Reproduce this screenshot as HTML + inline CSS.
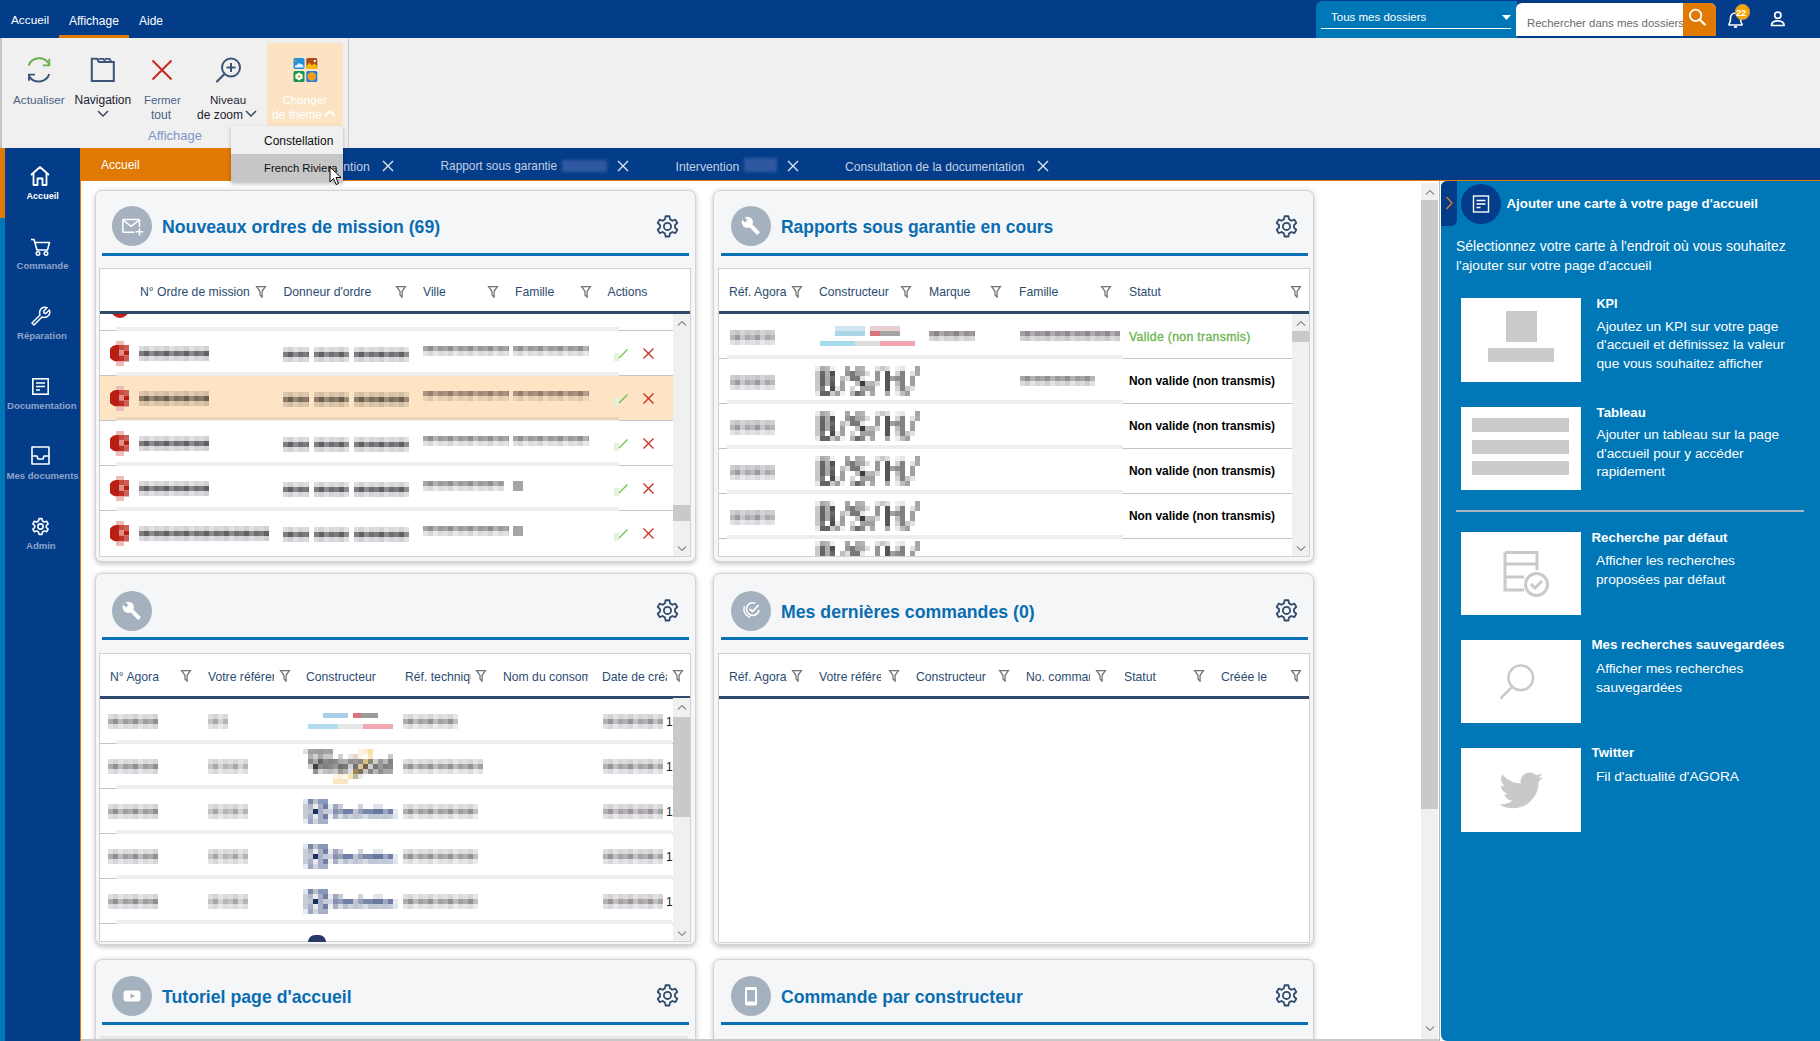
<!DOCTYPE html>
<html><head><meta charset="utf-8">
<style>
*{box-sizing:border-box;margin:0;padding:0}
html,body{width:1820px;height:1041px;overflow:hidden;background:#fff;font-family:"Liberation Sans",sans-serif;position:relative}
.a{position:absolute}
.t{position:absolute;white-space:nowrap;line-height:1}
#top{left:0;top:0;width:1820px;height:38px;background:#033d8a}
#ribbon{left:0;top:38px;width:1820px;height:110px;background:#f0f0f0;border-left:2px solid #c4c4c4}
#tabbar{left:80px;top:148px;width:1740px;height:33px;background:#033d8a;border-bottom:1px solid #e07a05}
#side{left:5px;top:148px;width:75px;height:893px;background:#033d8a}
.card{position:absolute;width:600px;background:#f5f6f8;border:1px solid #d4d4d4;border-radius:7px;box-shadow:0 1.5px 5px rgba(0,0,0,.24)}
.circ{position:absolute;left:16px;top:15px;width:40px;height:40px;border-radius:50%;background:#a6b1bf}
.ctitle{position:absolute;left:66px;top:26px;font-weight:bold;font-size:17.7px;color:#0a6db0;white-space:nowrap;line-height:1}
.cline{position:absolute;left:6px;top:62px;width:588px;height:3px;background:#0a6fb5}
.gear{position:absolute;left:559px;top:24px;width:22px;height:22px}
.tbl{position:absolute;left:3px;top:77px;width:592px;background:#fff;border:1px solid #d2d2d2}
.th{position:absolute;top:0;left:0;right:0;height:46px;border-bottom:3px solid #2f4a6a}
.hd{position:absolute;top:17px;font-size:12.5px;color:#2c4a6c;white-space:nowrap;line-height:1}
.flt{position:absolute;top:16px;width:10px;height:13px}
</style></head><body>
<div id="top" class="a"></div>
<div id="ribbon" class="a"></div>
<div id="tabbar" class="a"></div>
<div class="a" style="left:0;top:148px;width:5px;height:70px;background:#e07a05"></div>
<div class="a" style="left:0;top:218px;width:5px;height:823px;background:#0077b6"></div>
<div id="side" class="a"></div>
<div class="a" style="left:80px;top:181px;width:1px;height:860px;background:#e07a05"></div>
<div class="a" style="left:81px;top:1039px;width:1358px;height:2px;background:#c8c8c8"></div>

<!-- top bar content -->
<div class="t" style="left:11px;top:15px;font-size:11.8px;color:#fff">Accueil</div>
<div class="t" style="left:69px;top:15px;font-size:12px;color:#fff">Affichage</div>
<div class="t" style="left:139px;top:15px;font-size:12px;color:#fff">Aide</div>
<div class="a" style="left:59px;top:35px;width:70px;height:3px;background:#e07a05"></div>
<div class="a" style="left:1316px;top:1px;width:201px;height:37px;background:#0077b6;border-radius:6px 0 0 0"></div>
<div class="t" style="left:1331px;top:12.3px;font-size:11.5px;color:#fff">Tous mes dossiers</div>
<div class="a" style="left:1321px;top:28px;width:190px;height:1px;background:#fff"></div>
<svg class="a" style="left:1502px;top:15px" width="10" height="6"><path d="M0,0 L9,0 L4.5,5 Z" fill="#fff"/></svg>
<div class="a" style="left:1516px;top:3px;width:200px;height:33px;background:#fff;border-radius:6px 6px 0 0;overflow:hidden">
  <div class="t" style="left:11px;top:14.5px;font-size:11.4px;color:#6a6a6a">Rechercher dans mes dossiers</div>
  <div class="a" style="left:167px;top:0;width:33px;height:33px;background:#e07a05"></div>
</div>
<svg class="a" style="left:1689px;top:8px" width="22" height="22" viewBox="0 0 22 22"><circle cx="6.6" cy="7.4" r="5.7" fill="none" stroke="#fff" stroke-width="1.8"/><path d="M10.6,11.5 L15.8,16.6" stroke="#fff" stroke-width="2.1" stroke-linecap="round"/></svg>
<svg class="a" style="left:1726px;top:10px" width="20" height="20" viewBox="0 0 20 20"><path d="M3,15 L3,14 C4.5,12.5 4.5,11 4.5,8.5 C4.5,5 7,3 9.5,3 C12,3 14.5,5 14.5,8.5 C14.5,11 14.5,12.5 16,14 L16,15 Z" fill="none" stroke="#fff" stroke-width="1.6" stroke-linejoin="round"/><path d="M8,17 L11,17" stroke="#fff" stroke-width="1.8"/></svg>
<div class="a" style="left:1734.5px;top:4px;width:15.5px;height:15.5px;border-radius:50%;background:#f7a500;border:1px solid #d8a040"></div>
<div class="t" style="left:1736px;top:7.5px;font-size:9.5px;font-weight:bold;color:#fff;letter-spacing:-0.3px">22</div>
<svg class="a" style="left:1768px;top:10px" width="20" height="18" viewBox="0 0 20 18"><circle cx="9.8" cy="5.2" r="3.1" fill="none" stroke="#fff" stroke-width="1.7"/><path d="M3.5,15.5 C3.5,12 6.5,10.8 9.8,10.8 C13.1,10.8 16.1,12 16.1,15.5 Z" fill="none" stroke="#fff" stroke-width="1.7" stroke-linejoin="round"/></svg>

<!-- ribbon content -->
<svg class="a" style="left:26px;top:55px" width="28" height="30" viewBox="0 0 28 30">
  <path d="M2.6,10.6 A11.3,11.3 0 0 1 22.8,8.6" fill="none" stroke="#6ab04c" stroke-width="1.9"/>
  <path d="M23.3,3.8 L23.3,10.4 L16.8,10.4" fill="none" stroke="#6ab04c" stroke-width="1.9"/>
  <path d="M23.3,19.2 A11.3,11.3 0 0 1 3.4,21.6" fill="none" stroke="#3b5578" stroke-width="1.9"/>
  <path d="M3,25.8 L3,19.6 L9,19.6" fill="none" stroke="#3b5578" stroke-width="1.9"/>
</svg>
<svg class="a" style="left:90px;top:57px" width="26" height="26" viewBox="0 0 26 26">
  <path d="M1.8,1.8 L7,1.8 L9,5 L23.8,5 L23.8,24 L1.8,24 Z" fill="none" stroke="#3b5578" stroke-width="2"/>
  <path d="M8.5,1.8 L13.5,1.8 L15.5,5 M15,1.8 L19.5,1.8 L21.5,5" fill="none" stroke="#3b5578" stroke-width="1.8"/>
</svg>
<svg class="a" style="left:150px;top:58px" width="24" height="24" viewBox="0 0 24 24"><path d="M2.5,2.5 L21.5,21.5 M21.5,2.5 L2.5,21.5" stroke="#c9281c" stroke-width="2"/></svg>
<svg class="a" style="left:214px;top:55.5px" width="30" height="30" viewBox="0 0 30 30">
  <circle cx="17" cy="11.5" r="9" fill="none" stroke="#3b5578" stroke-width="2"/>
  <path d="M10.5,18 L3,25.5" stroke="#3b5578" stroke-width="2.2" stroke-linecap="round"/>
  <path d="M17,7 L17,16 M12.5,11.5 L21.5,11.5" stroke="#3b5578" stroke-width="2"/>
</svg>
<div class="a" style="left:267px;top:43px;width:76px;height:83px;background:#fce3c4"></div>
<svg class="a" style="left:292.5px;top:58px" width="26" height="26" viewBox="0 0 26 26">
  <rect x="0.5" y="0" width="11" height="11" rx="1.6" fill="#1e90e0"/>
  <path d="M2,9.5 C1.5,8 2.5,6.8 4,7 C4.3,5.2 6.5,4.6 7.6,6 C8.8,5.6 10.2,6.4 10,7.8 C11,8.2 10.8,9.5 10,9.6 Z" fill="#e8eef4"/>
  <circle cx="2.6" cy="2.6" r="1.1" fill="#f08a10"/>
  <rect x="13.3" y="0" width="11" height="11" rx="1.6" fill="#b04a18"/>
  <path d="M13.3,11 L13.3,8 L16.5,4.8 L19,7.2 L21.5,5.5 L24.3,8.5 L24.3,11 Z" fill="#f5b810"/>
  <circle cx="21.8" cy="3" r="1.2" fill="#fdf0c8"/>
  <rect x="0.5" y="13" width="11" height="11" rx="1.6" fill="#16964e"/>
  <g fill="#fff"><circle cx="6" cy="16.2" r="1.6"/><circle cx="6" cy="20.8" r="1.6"/><circle cx="3.9" cy="17.4" r="1.6"/><circle cx="8.1" cy="17.4" r="1.6"/><circle cx="3.9" cy="19.6" r="1.6"/><circle cx="8.1" cy="19.6" r="1.6"/></g>
  <circle cx="6" cy="18.5" r="1.3" fill="#f5a010"/>
  <rect x="13.3" y="13" width="11" height="11" rx="1.6" fill="#2a7ad8"/>
  <circle cx="18.8" cy="18.5" r="3.9" fill="#f59a10" stroke="#f8c030" stroke-width="0.8" stroke-dasharray="1 1"/>
</svg>
<div class="t" style="left:13px;top:94.5px;font-size:11.8px;color:#4a6385">Actualiser</div>
<div class="t" style="left:74.5px;top:94.3px;font-size:12px;color:#1c2233">Navigation</div>
<svg class="a" style="left:97px;top:110px" width="12" height="7" viewBox="0 0 12 7"><path d="M1,1 L6,6 L11,1" fill="none" stroke="#3b4660" stroke-width="1.5"/></svg>
<div class="t" style="left:144px;top:94.5px;font-size:11.4px;color:#4a6385">Fermer</div>
<div class="t" style="left:151px;top:108.5px;font-size:12px;color:#4a6385">tout</div>
<div class="t" style="left:210px;top:93.5px;font-size:11.6px;color:#1c2233">Niveau</div>
<div class="t" style="left:197px;top:108.5px;font-size:12px;color:#1c2233">de zoom</div>
<svg class="a" style="left:245px;top:110px" width="12" height="7" viewBox="0 0 12 7"><path d="M1,1 L6,6 L11,1" fill="none" stroke="#3b4660" stroke-width="1.5"/></svg>
<div class="t" style="left:282.5px;top:93.5px;font-size:11.6px;color:#fff">Changer</div>
<div class="t" style="left:272px;top:108.5px;font-size:12px;color:#fff">de thème</div>
<svg class="a" style="left:324px;top:110px" width="12" height="7" viewBox="0 0 12 7"><path d="M1,6 L6,1 L11,6" fill="none" stroke="#fff" stroke-width="1.8"/></svg>
<div class="t" style="left:148px;top:128.5px;font-size:13px;color:#7f95c2">Affichage</div>
<div class="a" style="left:348px;top:38px;width:1px;height:110px;background:#c8c8c8"></div>

<!-- tabs -->
<div class="a" style="left:80px;top:148px;width:152px;height:33px;background:#e07a05"></div>
<div class="t" style="left:101px;top:158.5px;font-size:12px;color:#fff">Accueil</div>
<div class="t" style="left:306px;top:160.5px;font-size:12.2px;color:#c3cfe2">Intervention</div>
<svg class="a" style="left:382px;top:160px" width="12" height="12" viewBox="0 0 12 12"><path d="M1,1 L11,11 M11,1 L1,11" stroke="#dfe6f0" stroke-width="1.4"/></svg>
<div class="t" style="left:440.5px;top:160.5px;font-size:11.85px;color:#c3cfe2">Rapport sous garantie</div>
<div class="a" style="left:562px;top:160px;width:45px;height:12px;background:#3a5fa6;filter:blur(1.5px);opacity:.8"></div>
<svg class="a" style="left:617px;top:160px" width="12" height="12" viewBox="0 0 12 12"><path d="M1,1 L11,11 M11,1 L1,11" stroke="#dfe6f0" stroke-width="1.4"/></svg>
<div class="t" style="left:675.5px;top:160.5px;font-size:12.2px;color:#c3cfe2">Intervention</div>
<div class="a" style="left:744px;top:158px;width:33px;height:14px;background:#3a5fa6;filter:blur(1.5px);opacity:.8"></div>
<svg class="a" style="left:787px;top:160px" width="12" height="12" viewBox="0 0 12 12"><path d="M1,1 L11,11 M11,1 L1,11" stroke="#dfe6f0" stroke-width="1.4"/></svg>
<div class="t" style="left:845px;top:160.5px;font-size:12.1px;color:#c3cfe2">Consultation de la documentation</div>
<svg class="a" style="left:1037px;top:160px" width="12" height="12" viewBox="0 0 12 12"><path d="M1,1 L11,11 M11,1 L1,11" stroke="#dfe6f0" stroke-width="1.4"/></svg>

<!-- sidebar -->
<svg class="a" style="left:29px;top:165px" width="22" height="22" viewBox="0 0 22 22"><path d="M2,10 L11,2 L20,10 M4.5,8 L4.5,20 L8.5,20 L8.5,13.5 L13.5,13.5 L13.5,20 L17.5,20 L17.5,8" fill="none" stroke="#fff" stroke-width="1.8" stroke-linejoin="round"/></svg>
<div class="t" style="left:26.5px;top:192px;font-size:9.1px;font-weight:bold;color:#fff">Accueil</div>
<svg class="a" style="left:30px;top:238px" width="22" height="19" viewBox="0 0 22 19"><path d="M1,1.5 L4,1.5 L7,12 L17.5,12 L19.5,4.5 L5.5,4.5" fill="none" stroke="#fff" stroke-width="1.6" stroke-linejoin="round"/><circle cx="8" cy="15.5" r="1.8" fill="none" stroke="#fff" stroke-width="1.5"/><circle cx="16" cy="15.5" r="1.8" fill="none" stroke="#fff" stroke-width="1.5"/></svg>
<div class="t" style="left:16.5px;top:261px;font-size:9.55px;font-weight:bold;color:#8fa5c9">Commande</div>
<svg class="a" style="left:30px;top:306px" width="21" height="21" viewBox="0 0 21 21"><path d="M3,18 L11,10 C10,7 11,3.5 14,2.5 C15.5,2 17,2.2 18,2.7 L14.5,6.2 L15,8 L16.8,8.5 L20.3,5 C20.8,6 21,7.5 20.5,9 C19.5,12 16,13 13,12 L5,20 Z" fill="none" stroke="#fff" stroke-width="1.5" stroke-linejoin="round" transform="translate(-1,-1)"/></svg>
<div class="t" style="left:17px;top:331px;font-size:9.55px;font-weight:bold;color:#8fa5c9">Réparation</div>
<svg class="a" style="left:31.5px;top:377.5px" width="17" height="17" viewBox="0 0 17 17"><rect x="0.8" y="0.8" width="15.4" height="15.4" fill="none" stroke="#fff" stroke-width="1.6"/><path d="M4,5 L13,5 M4,8.5 L13,8.5 M4,12 L8,12" stroke="#fff" stroke-width="1.5"/></svg>
<div class="t" style="left:7px;top:401px;font-size:9.55px;font-weight:bold;color:#8fa5c9">Documentation</div>
<svg class="a" style="left:31px;top:446px" width="19" height="19" viewBox="0 0 19 19"><path d="M1,1 L18,1 L18,18 L1,18 Z M1,10 L6,10 L7,13 L12,13 L13,10 L18,10" fill="none" stroke="#fff" stroke-width="1.6" stroke-linejoin="round"/></svg>
<div class="t" style="left:6.5px;top:471px;font-size:9.55px;font-weight:bold;color:#8fa5c9">Mes documents</div>
<svg class="a" style="left:30px;top:516px" width="21" height="21" viewBox="0 0 24 24"><path d="M10.3,2 L13.7,2 L14.3,4.8 C15,5.1 15.7,5.5 16.3,6 L19,5 L20.7,8 L18.6,9.9 C18.7,10.6 18.7,11.4 18.6,12.1 L20.7,14 L19,17 L16.3,16 C15.7,16.5 15,16.9 14.3,17.2 L13.7,20 L10.3,20 L9.7,17.2 C9,16.9 8.3,16.5 7.7,16 L5,17 L3.3,14 L5.4,12.1 C5.3,11.4 5.3,10.6 5.4,9.9 L3.3,8 L5,5 L7.7,6 C8.3,5.5 9,5.1 9.7,4.8 Z" fill="none" stroke="#fff" stroke-width="1.8" stroke-linejoin="round" transform="translate(0,1)"/><circle cx="12" cy="12" r="3" fill="none" stroke="#fff" stroke-width="1.8"/></svg>
<div class="t" style="left:26px;top:541px;font-size:9.55px;font-weight:bold;color:#8fa5c9">Admin</div>
<div class="card" style="left:95px;top:190px;width:601px;height:372px"></div>
<div class="a" style="left:112px;top:206px;width:40px;height:40px;border-radius:50%;background:#a6b1bf"></div>
<svg class="a" style="left:112px;top:206px" width="40" height="40" viewBox="0 0 40 40"><path d="M27.5,21 L27.5,14.6 Q27.5,13.6 26.5,13.6 L11.8,13.6 Q10.8,13.6 10.8,14.6 L10.8,25.2 Q10.8,26.2 11.8,26.2 L22.5,26.2" fill="none" stroke="#fff" stroke-width="1.5"/><path d="M11.4,14.4 L19.2,20.3 L27,14.4" fill="none" stroke="#fff" stroke-width="1.5"/><path d="M27.5,22.2 L27.5,29.5 M23.8,25.8 L31.2,25.8" stroke="#fff" stroke-width="1.5"/></svg>
<div class="t" style="left:162px;top:219.21px;font-size:17.7px;color:#0a6db0;font-weight:bold;">Nouveaux ordres de mission (69)</div>
<div class="a" style="left:102px;top:253px;width:587px;height:3px;background:#0a6fb5"></div>
<svg class="a" style="left:653.5px;top:213.5px" width="27" height="27" viewBox="0 0 24 24"><path d="M10.3,2 L13.7,2 L14.3,4.8 C15,5.1 15.7,5.5 16.3,6 L19,5 L20.7,8 L18.6,9.9 C18.7,10.6 18.7,11.4 18.6,12.1 L20.7,14 L19,17 L16.3,16 C15.7,16.5 15,16.9 14.3,17.2 L13.7,20 L10.3,20 L9.7,17.2 C9,16.9 8.3,16.5 7.7,16 L5,17 L3.3,14 L5.4,12.1 C5.3,11.4 5.3,10.6 5.4,9.9 L3.3,8 L5,5 L7.7,6 C8.3,5.5 9,5.1 9.7,4.8 Z" fill="none" stroke="#2f4a6a" stroke-width="1.6" stroke-linejoin="round"/><circle cx="12" cy="11" r="3.2" fill="none" stroke="#2f4a6a" stroke-width="1.6"/></svg>
<div class="a" style="left:99px;top:268px;width:592px;height:289px;background:#fff;border:1px solid #d0d0d0"></div>
<div class="a" style="left:100px;top:311px;width:590px;height:3px;background:#2f4a6a"></div>
<div class="t" style="left:140px;top:285.67px;font-size:12.2px;color:#2c4b70;font-weight:normal;">N° Ordre de mission</div>
<svg class="a" style="left:255px;top:285px" width="12" height="13" viewBox="0 0 12 13"><path d="M1.6,1.7 L10.4,1.7 L7.1,6.3 L7.1,12.2 L5,9.9 L5,6.3 Z" fill="none" stroke="#727272" stroke-width="1.25" stroke-linejoin="miter"/></svg>
<div class="t" style="left:283.5px;top:285.67px;font-size:12.2px;color:#2c4b70;font-weight:normal;">Donneur d'ordre</div>
<svg class="a" style="left:395px;top:285px" width="12" height="13" viewBox="0 0 12 13"><path d="M1.6,1.7 L10.4,1.7 L7.1,6.3 L7.1,12.2 L5,9.9 L5,6.3 Z" fill="none" stroke="#727272" stroke-width="1.25" stroke-linejoin="miter"/></svg>
<div class="t" style="left:423px;top:285.67px;font-size:12.2px;color:#2c4b70;font-weight:normal;">Ville</div>
<svg class="a" style="left:487px;top:285px" width="12" height="13" viewBox="0 0 12 13"><path d="M1.6,1.7 L10.4,1.7 L7.1,6.3 L7.1,12.2 L5,9.9 L5,6.3 Z" fill="none" stroke="#727272" stroke-width="1.25" stroke-linejoin="miter"/></svg>
<div class="t" style="left:515px;top:285.67px;font-size:12.2px;color:#2c4b70;font-weight:normal;">Famille</div>
<svg class="a" style="left:580px;top:285px" width="12" height="13" viewBox="0 0 12 13"><path d="M1.6,1.7 L10.4,1.7 L7.1,6.3 L7.1,12.2 L5,9.9 L5,6.3 Z" fill="none" stroke="#727272" stroke-width="1.25" stroke-linejoin="miter"/></svg>
<div class="t" style="left:607.5px;top:285.67px;font-size:12.2px;color:#2c4b70;font-weight:normal;">Actions</div>
<div class="a" style="left:100px;top:376px;width:573px;height:44px;background:#fde4c4"></div>
<div class="a" style="left:100px;top:330px;width:16px;height:1px;background:#c4c4c4"></div>
<div class="a" style="left:619px;top:330px;width:54px;height:1px;background:#c4c4c4"></div>
<div class="a" style="left:116px;top:327px;width:503px;height:4px;background:rgba(0,0,0,.065)"></div>
<div class="a" style="left:100px;top:375px;width:16px;height:1px;background:#c4c4c4"></div>
<div class="a" style="left:619px;top:375px;width:54px;height:1px;background:#c4c4c4"></div>
<div class="a" style="left:116px;top:372px;width:503px;height:4px;background:rgba(0,0,0,.065)"></div>
<div class="a" style="left:100px;top:420px;width:16px;height:1px;background:#c4c4c4"></div>
<div class="a" style="left:619px;top:420px;width:54px;height:1px;background:#c4c4c4"></div>
<div class="a" style="left:116px;top:417px;width:503px;height:4px;background:rgba(0,0,0,.065)"></div>
<div class="a" style="left:100px;top:465px;width:16px;height:1px;background:#c4c4c4"></div>
<div class="a" style="left:619px;top:465px;width:54px;height:1px;background:#c4c4c4"></div>
<div class="a" style="left:116px;top:462px;width:503px;height:4px;background:rgba(0,0,0,.065)"></div>
<div class="a" style="left:100px;top:510px;width:16px;height:1px;background:#c4c4c4"></div>
<div class="a" style="left:619px;top:510px;width:54px;height:1px;background:#c4c4c4"></div>
<div class="a" style="left:116px;top:507px;width:503px;height:4px;background:rgba(0,0,0,.065)"></div>
<div class="a" style="left:110px;top:314px;width:20px;height:6px;overflow:hidden"><div class="a" style="left:1px;top:-14px;width:18px;height:18px;border-radius:50%;background:#c0201a"></div></div>
<svg class="a" style="left:110px;top:341px" width="20" height="25" viewBox="0 0 20 25"><path d="M6,4 L6,20.5 A8.3,8.3 0 0 1 6,4 Z" fill="#b91e12"/><rect x="5.8" y="4" width="3.3" height="16.5" fill="#b91e12"/><rect x="9" y="4" width="5" height="5.5" fill="#c84a40"/><rect x="9" y="9.5" width="5" height="5" fill="#e0908a"/><rect x="9" y="14.5" width="5" height="6" fill="#c0302a"/><rect x="14" y="4" width="5" height="5.5" fill="#cc6055"/><rect x="14" y="9.5" width="5" height="5" fill="#b91e12"/><rect x="14" y="14.5" width="5" height="6" fill="#cc6058"/><rect x="6" y="0" width="8" height="4" fill="#ecbcb8"/><rect x="6" y="20.5" width="8" height="4.5" fill="#ecbcb8"/></svg>
<div class="a" style="left:139px;top:346px;width:70px;height:15px"><div class="a" style="left:0;top:0;width:100%;height:5.00px;background:repeating-linear-gradient(90deg,#dcdcdf 0 5px,#d2d2d5 5px 10px,#e2e2e5 10px 15px,#d7d7da 15px 20px)"></div><div class="a" style="left:0;top:5.00px;width:100%;height:5.00px;background:repeating-linear-gradient(90deg,#7f7c80 0 5px,#636064 5px 10px,#8f8c90 10px 15px,#716e72 15px 20px)"></div><div class="a" style="left:0;top:10.00px;width:100%;height:5.00px;background:repeating-linear-gradient(90deg,#d9dade 0 5px,#cfd0d4 5px 10px,#dfe0e4 10px 15px,#d4d5d9 15px 20px)"></div></div>
<div class="a" style="left:283px;top:347px;width:26px;height:15px"><div class="a" style="left:0;top:0;width:100%;height:5.00px;background:repeating-linear-gradient(90deg,#dcdcdf 0 5px,#d2d2d5 5px 10px,#e2e2e5 10px 15px,#d7d7da 15px 20px)"></div><div class="a" style="left:0;top:5.00px;width:100%;height:5.00px;background:repeating-linear-gradient(90deg,#7f7c80 0 5px,#636064 5px 10px,#8f8c90 10px 15px,#716e72 15px 20px)"></div><div class="a" style="left:0;top:10.00px;width:100%;height:5.00px;background:repeating-linear-gradient(90deg,#d9dade 0 5px,#cfd0d4 5px 10px,#dfe0e4 10px 15px,#d4d5d9 15px 20px)"></div></div>
<div class="a" style="left:314px;top:347px;width:35px;height:15px"><div class="a" style="left:0;top:0;width:100%;height:5.00px;background:repeating-linear-gradient(90deg,#dcdcdf 0 5px,#d2d2d5 5px 10px,#e2e2e5 10px 15px,#d7d7da 15px 20px)"></div><div class="a" style="left:0;top:5.00px;width:100%;height:5.00px;background:repeating-linear-gradient(90deg,#7f7c80 0 5px,#636064 5px 10px,#8f8c90 10px 15px,#716e72 15px 20px)"></div><div class="a" style="left:0;top:10.00px;width:100%;height:5.00px;background:repeating-linear-gradient(90deg,#d9dade 0 5px,#cfd0d4 5px 10px,#dfe0e4 10px 15px,#d4d5d9 15px 20px)"></div></div>
<div class="a" style="left:354px;top:347px;width:55px;height:15px"><div class="a" style="left:0;top:0;width:100%;height:5.00px;background:repeating-linear-gradient(90deg,#dcdcdf 0 5px,#d2d2d5 5px 10px,#e2e2e5 10px 15px,#d7d7da 15px 20px)"></div><div class="a" style="left:0;top:5.00px;width:100%;height:5.00px;background:repeating-linear-gradient(90deg,#7f7c80 0 5px,#636064 5px 10px,#8f8c90 10px 15px,#716e72 15px 20px)"></div><div class="a" style="left:0;top:10.00px;width:100%;height:5.00px;background:repeating-linear-gradient(90deg,#d9dade 0 5px,#cfd0d4 5px 10px,#dfe0e4 10px 15px,#d4d5d9 15px 20px)"></div></div>
<div class="a" style="left:423px;top:346px;width:86px;height:10px"><div class="a" style="left:0;top:0;width:100%;height:5.00px;background:repeating-linear-gradient(90deg,#a7a4a8 0 5px,#918e92 5px 10px,#b4b1b5 10px 15px,#9c999d 15px 20px)"></div><div class="a" style="left:0;top:5.00px;width:100%;height:5.00px;background:repeating-linear-gradient(90deg,#e2e2e2 0 5px,#d6d6d6 5px 10px,#e9e9e9 10px 15px,#dcdcdc 15px 20px)"></div></div>
<div class="a" style="left:513px;top:346px;width:76px;height:10px"><div class="a" style="left:0;top:0;width:100%;height:5.00px;background:repeating-linear-gradient(90deg,#a7a4a8 0 5px,#918e92 5px 10px,#b4b1b5 10px 15px,#9c999d 15px 20px)"></div><div class="a" style="left:0;top:5.00px;width:100%;height:5.00px;background:repeating-linear-gradient(90deg,#e2e2e2 0 5px,#d6d6d6 5px 10px,#e9e9e9 10px 15px,#dcdcdc 15px 20px)"></div></div>
<svg class="a" style="left:613px;top:347px" width="16" height="14" viewBox="0 0 16 14"><rect x="1" y="6" width="5" height="8" fill="#e4f2dc"/><path d="M6,11 L14.5,2.5" stroke="#6cc04a" stroke-width="1.3"/></svg>
<svg class="a" style="left:642px;top:347px" width="13" height="13" viewBox="0 0 13 13"><path d="M1.5,1.5 L11.5,11.5 M11.5,1.5 L1.5,11.5" stroke="#c9281c" stroke-width="1.2"/></svg>
<svg class="a" style="left:110px;top:386px" width="20" height="25" viewBox="0 0 20 25"><path d="M6,4 L6,20.5 A8.3,8.3 0 0 1 6,4 Z" fill="#b91e12"/><rect x="5.8" y="4" width="3.3" height="16.5" fill="#b91e12"/><rect x="9" y="4" width="5" height="5.5" fill="#c84a40"/><rect x="9" y="9.5" width="5" height="5" fill="#e0908a"/><rect x="9" y="14.5" width="5" height="6" fill="#c0302a"/><rect x="14" y="4" width="5" height="5.5" fill="#cc6055"/><rect x="14" y="9.5" width="5" height="5" fill="#b91e12"/><rect x="14" y="14.5" width="5" height="6" fill="#cc6058"/><rect x="6" y="0" width="8" height="4" fill="#ecbcb8"/><rect x="6" y="20.5" width="8" height="4.5" fill="#ecbcb8"/></svg>
<div class="a" style="left:139px;top:391px;width:70px;height:15px"><div class="a" style="left:0;top:0;width:100%;height:5.00px;background:repeating-linear-gradient(90deg,#dcc7ac 0 5px,#d2bda2 5px 10px,#e2cdb2 10px 15px,#d7c2a7 15px 20px)"></div><div class="a" style="left:0;top:5.00px;width:100%;height:5.00px;background:repeating-linear-gradient(90deg,#8a7a68 0 5px,#6e5e4c 5px 10px,#9a8a78 10px 15px,#7c6c5a 15px 20px)"></div><div class="a" style="left:0;top:10.00px;width:100%;height:5.00px;background:repeating-linear-gradient(90deg,#dcc6aa 0 5px,#d2bca0 5px 10px,#e2ccb0 10px 15px,#d7c1a5 15px 20px)"></div></div>
<div class="a" style="left:283px;top:392px;width:26px;height:15px"><div class="a" style="left:0;top:0;width:100%;height:5.00px;background:repeating-linear-gradient(90deg,#dcc7ac 0 5px,#d2bda2 5px 10px,#e2cdb2 10px 15px,#d7c2a7 15px 20px)"></div><div class="a" style="left:0;top:5.00px;width:100%;height:5.00px;background:repeating-linear-gradient(90deg,#8a7a68 0 5px,#6e5e4c 5px 10px,#9a8a78 10px 15px,#7c6c5a 15px 20px)"></div><div class="a" style="left:0;top:10.00px;width:100%;height:5.00px;background:repeating-linear-gradient(90deg,#dcc6aa 0 5px,#d2bca0 5px 10px,#e2ccb0 10px 15px,#d7c1a5 15px 20px)"></div></div>
<div class="a" style="left:314px;top:392px;width:35px;height:15px"><div class="a" style="left:0;top:0;width:100%;height:5.00px;background:repeating-linear-gradient(90deg,#dcc7ac 0 5px,#d2bda2 5px 10px,#e2cdb2 10px 15px,#d7c2a7 15px 20px)"></div><div class="a" style="left:0;top:5.00px;width:100%;height:5.00px;background:repeating-linear-gradient(90deg,#8a7a68 0 5px,#6e5e4c 5px 10px,#9a8a78 10px 15px,#7c6c5a 15px 20px)"></div><div class="a" style="left:0;top:10.00px;width:100%;height:5.00px;background:repeating-linear-gradient(90deg,#dcc6aa 0 5px,#d2bca0 5px 10px,#e2ccb0 10px 15px,#d7c1a5 15px 20px)"></div></div>
<div class="a" style="left:354px;top:392px;width:55px;height:15px"><div class="a" style="left:0;top:0;width:100%;height:5.00px;background:repeating-linear-gradient(90deg,#dcc7ac 0 5px,#d2bda2 5px 10px,#e2cdb2 10px 15px,#d7c2a7 15px 20px)"></div><div class="a" style="left:0;top:5.00px;width:100%;height:5.00px;background:repeating-linear-gradient(90deg,#8a7a68 0 5px,#6e5e4c 5px 10px,#9a8a78 10px 15px,#7c6c5a 15px 20px)"></div><div class="a" style="left:0;top:10.00px;width:100%;height:5.00px;background:repeating-linear-gradient(90deg,#dcc6aa 0 5px,#d2bca0 5px 10px,#e2ccb0 10px 15px,#d7c1a5 15px 20px)"></div></div>
<div class="a" style="left:423px;top:391px;width:86px;height:10px"><div class="a" style="left:0;top:0;width:100%;height:5.00px;background:repeating-linear-gradient(90deg,#a89480 0 5px,#927e6a 5px 10px,#b5a18d 10px 15px,#9d8975 15px 20px)"></div><div class="a" style="left:0;top:5.00px;width:100%;height:5.00px;background:repeating-linear-gradient(90deg,#e7d2b4 0 5px,#dbc6a8 5px 10px,#eed9bb 10px 15px,#e1ccae 15px 20px)"></div></div>
<div class="a" style="left:513px;top:391px;width:76px;height:10px"><div class="a" style="left:0;top:0;width:100%;height:5.00px;background:repeating-linear-gradient(90deg,#a89480 0 5px,#927e6a 5px 10px,#b5a18d 10px 15px,#9d8975 15px 20px)"></div><div class="a" style="left:0;top:5.00px;width:100%;height:5.00px;background:repeating-linear-gradient(90deg,#e7d2b4 0 5px,#dbc6a8 5px 10px,#eed9bb 10px 15px,#e1ccae 15px 20px)"></div></div>
<svg class="a" style="left:613px;top:392px" width="16" height="14" viewBox="0 0 16 14"><rect x="1" y="6" width="5" height="8" fill="#e4f2dc"/><path d="M6,11 L14.5,2.5" stroke="#6cc04a" stroke-width="1.3"/></svg>
<svg class="a" style="left:642px;top:392px" width="13" height="13" viewBox="0 0 13 13"><path d="M1.5,1.5 L11.5,11.5 M11.5,1.5 L1.5,11.5" stroke="#c9281c" stroke-width="1.2"/></svg>
<svg class="a" style="left:110px;top:431px" width="20" height="25" viewBox="0 0 20 25"><path d="M6,4 L6,20.5 A8.3,8.3 0 0 1 6,4 Z" fill="#b91e12"/><rect x="5.8" y="4" width="3.3" height="16.5" fill="#b91e12"/><rect x="9" y="4" width="5" height="5.5" fill="#c84a40"/><rect x="9" y="9.5" width="5" height="5" fill="#e0908a"/><rect x="9" y="14.5" width="5" height="6" fill="#c0302a"/><rect x="14" y="4" width="5" height="5.5" fill="#cc6055"/><rect x="14" y="9.5" width="5" height="5" fill="#b91e12"/><rect x="14" y="14.5" width="5" height="6" fill="#cc6058"/><rect x="6" y="0" width="8" height="4" fill="#ecbcb8"/><rect x="6" y="20.5" width="8" height="4.5" fill="#ecbcb8"/></svg>
<div class="a" style="left:139px;top:436px;width:70px;height:15px"><div class="a" style="left:0;top:0;width:100%;height:5.00px;background:repeating-linear-gradient(90deg,#dcdcdf 0 5px,#d2d2d5 5px 10px,#e2e2e5 10px 15px,#d7d7da 15px 20px)"></div><div class="a" style="left:0;top:5.00px;width:100%;height:5.00px;background:repeating-linear-gradient(90deg,#7f7c80 0 5px,#636064 5px 10px,#8f8c90 10px 15px,#716e72 15px 20px)"></div><div class="a" style="left:0;top:10.00px;width:100%;height:5.00px;background:repeating-linear-gradient(90deg,#d9dade 0 5px,#cfd0d4 5px 10px,#dfe0e4 10px 15px,#d4d5d9 15px 20px)"></div></div>
<div class="a" style="left:283px;top:437px;width:26px;height:15px"><div class="a" style="left:0;top:0;width:100%;height:5.00px;background:repeating-linear-gradient(90deg,#dcdcdf 0 5px,#d2d2d5 5px 10px,#e2e2e5 10px 15px,#d7d7da 15px 20px)"></div><div class="a" style="left:0;top:5.00px;width:100%;height:5.00px;background:repeating-linear-gradient(90deg,#7f7c80 0 5px,#636064 5px 10px,#8f8c90 10px 15px,#716e72 15px 20px)"></div><div class="a" style="left:0;top:10.00px;width:100%;height:5.00px;background:repeating-linear-gradient(90deg,#d9dade 0 5px,#cfd0d4 5px 10px,#dfe0e4 10px 15px,#d4d5d9 15px 20px)"></div></div>
<div class="a" style="left:314px;top:437px;width:35px;height:15px"><div class="a" style="left:0;top:0;width:100%;height:5.00px;background:repeating-linear-gradient(90deg,#dcdcdf 0 5px,#d2d2d5 5px 10px,#e2e2e5 10px 15px,#d7d7da 15px 20px)"></div><div class="a" style="left:0;top:5.00px;width:100%;height:5.00px;background:repeating-linear-gradient(90deg,#7f7c80 0 5px,#636064 5px 10px,#8f8c90 10px 15px,#716e72 15px 20px)"></div><div class="a" style="left:0;top:10.00px;width:100%;height:5.00px;background:repeating-linear-gradient(90deg,#d9dade 0 5px,#cfd0d4 5px 10px,#dfe0e4 10px 15px,#d4d5d9 15px 20px)"></div></div>
<div class="a" style="left:354px;top:437px;width:55px;height:15px"><div class="a" style="left:0;top:0;width:100%;height:5.00px;background:repeating-linear-gradient(90deg,#dcdcdf 0 5px,#d2d2d5 5px 10px,#e2e2e5 10px 15px,#d7d7da 15px 20px)"></div><div class="a" style="left:0;top:5.00px;width:100%;height:5.00px;background:repeating-linear-gradient(90deg,#7f7c80 0 5px,#636064 5px 10px,#8f8c90 10px 15px,#716e72 15px 20px)"></div><div class="a" style="left:0;top:10.00px;width:100%;height:5.00px;background:repeating-linear-gradient(90deg,#d9dade 0 5px,#cfd0d4 5px 10px,#dfe0e4 10px 15px,#d4d5d9 15px 20px)"></div></div>
<div class="a" style="left:423px;top:436px;width:86px;height:10px"><div class="a" style="left:0;top:0;width:100%;height:5.00px;background:repeating-linear-gradient(90deg,#a7a4a8 0 5px,#918e92 5px 10px,#b4b1b5 10px 15px,#9c999d 15px 20px)"></div><div class="a" style="left:0;top:5.00px;width:100%;height:5.00px;background:repeating-linear-gradient(90deg,#e2e2e2 0 5px,#d6d6d6 5px 10px,#e9e9e9 10px 15px,#dcdcdc 15px 20px)"></div></div>
<div class="a" style="left:513px;top:436px;width:76px;height:10px"><div class="a" style="left:0;top:0;width:100%;height:5.00px;background:repeating-linear-gradient(90deg,#a7a4a8 0 5px,#918e92 5px 10px,#b4b1b5 10px 15px,#9c999d 15px 20px)"></div><div class="a" style="left:0;top:5.00px;width:100%;height:5.00px;background:repeating-linear-gradient(90deg,#e2e2e2 0 5px,#d6d6d6 5px 10px,#e9e9e9 10px 15px,#dcdcdc 15px 20px)"></div></div>
<svg class="a" style="left:613px;top:437px" width="16" height="14" viewBox="0 0 16 14"><rect x="1" y="6" width="5" height="8" fill="#e4f2dc"/><path d="M6,11 L14.5,2.5" stroke="#6cc04a" stroke-width="1.3"/></svg>
<svg class="a" style="left:642px;top:437px" width="13" height="13" viewBox="0 0 13 13"><path d="M1.5,1.5 L11.5,11.5 M11.5,1.5 L1.5,11.5" stroke="#c9281c" stroke-width="1.2"/></svg>
<svg class="a" style="left:110px;top:476px" width="20" height="25" viewBox="0 0 20 25"><path d="M6,4 L6,20.5 A8.3,8.3 0 0 1 6,4 Z" fill="#b91e12"/><rect x="5.8" y="4" width="3.3" height="16.5" fill="#b91e12"/><rect x="9" y="4" width="5" height="5.5" fill="#c84a40"/><rect x="9" y="9.5" width="5" height="5" fill="#e0908a"/><rect x="9" y="14.5" width="5" height="6" fill="#c0302a"/><rect x="14" y="4" width="5" height="5.5" fill="#cc6055"/><rect x="14" y="9.5" width="5" height="5" fill="#b91e12"/><rect x="14" y="14.5" width="5" height="6" fill="#cc6058"/><rect x="6" y="0" width="8" height="4" fill="#ecbcb8"/><rect x="6" y="20.5" width="8" height="4.5" fill="#ecbcb8"/></svg>
<div class="a" style="left:139px;top:481px;width:70px;height:15px"><div class="a" style="left:0;top:0;width:100%;height:5.00px;background:repeating-linear-gradient(90deg,#dcdcdf 0 5px,#d2d2d5 5px 10px,#e2e2e5 10px 15px,#d7d7da 15px 20px)"></div><div class="a" style="left:0;top:5.00px;width:100%;height:5.00px;background:repeating-linear-gradient(90deg,#7f7c80 0 5px,#636064 5px 10px,#8f8c90 10px 15px,#716e72 15px 20px)"></div><div class="a" style="left:0;top:10.00px;width:100%;height:5.00px;background:repeating-linear-gradient(90deg,#d9dade 0 5px,#cfd0d4 5px 10px,#dfe0e4 10px 15px,#d4d5d9 15px 20px)"></div></div>
<div class="a" style="left:283px;top:482px;width:26px;height:15px"><div class="a" style="left:0;top:0;width:100%;height:5.00px;background:repeating-linear-gradient(90deg,#dcdcdf 0 5px,#d2d2d5 5px 10px,#e2e2e5 10px 15px,#d7d7da 15px 20px)"></div><div class="a" style="left:0;top:5.00px;width:100%;height:5.00px;background:repeating-linear-gradient(90deg,#7f7c80 0 5px,#636064 5px 10px,#8f8c90 10px 15px,#716e72 15px 20px)"></div><div class="a" style="left:0;top:10.00px;width:100%;height:5.00px;background:repeating-linear-gradient(90deg,#d9dade 0 5px,#cfd0d4 5px 10px,#dfe0e4 10px 15px,#d4d5d9 15px 20px)"></div></div>
<div class="a" style="left:314px;top:482px;width:35px;height:15px"><div class="a" style="left:0;top:0;width:100%;height:5.00px;background:repeating-linear-gradient(90deg,#dcdcdf 0 5px,#d2d2d5 5px 10px,#e2e2e5 10px 15px,#d7d7da 15px 20px)"></div><div class="a" style="left:0;top:5.00px;width:100%;height:5.00px;background:repeating-linear-gradient(90deg,#7f7c80 0 5px,#636064 5px 10px,#8f8c90 10px 15px,#716e72 15px 20px)"></div><div class="a" style="left:0;top:10.00px;width:100%;height:5.00px;background:repeating-linear-gradient(90deg,#d9dade 0 5px,#cfd0d4 5px 10px,#dfe0e4 10px 15px,#d4d5d9 15px 20px)"></div></div>
<div class="a" style="left:354px;top:482px;width:55px;height:15px"><div class="a" style="left:0;top:0;width:100%;height:5.00px;background:repeating-linear-gradient(90deg,#dcdcdf 0 5px,#d2d2d5 5px 10px,#e2e2e5 10px 15px,#d7d7da 15px 20px)"></div><div class="a" style="left:0;top:5.00px;width:100%;height:5.00px;background:repeating-linear-gradient(90deg,#7f7c80 0 5px,#636064 5px 10px,#8f8c90 10px 15px,#716e72 15px 20px)"></div><div class="a" style="left:0;top:10.00px;width:100%;height:5.00px;background:repeating-linear-gradient(90deg,#d9dade 0 5px,#cfd0d4 5px 10px,#dfe0e4 10px 15px,#d4d5d9 15px 20px)"></div></div>
<div class="a" style="left:423px;top:481px;width:81px;height:10px"><div class="a" style="left:0;top:0;width:100%;height:5.00px;background:repeating-linear-gradient(90deg,#a7a4a8 0 5px,#918e92 5px 10px,#b4b1b5 10px 15px,#9c999d 15px 20px)"></div><div class="a" style="left:0;top:5.00px;width:100%;height:5.00px;background:repeating-linear-gradient(90deg,#e2e2e2 0 5px,#d6d6d6 5px 10px,#e9e9e9 10px 15px,#dcdcdc 15px 20px)"></div></div>
<div class="a" style="left:513px;top:481px;width:10px;height:10px"><div class="a" style="left:0;top:0;width:100%;height:100%;background:#a7a4a8"></div></div>
<svg class="a" style="left:613px;top:482px" width="16" height="14" viewBox="0 0 16 14"><rect x="1" y="6" width="5" height="8" fill="#e4f2dc"/><path d="M6,11 L14.5,2.5" stroke="#6cc04a" stroke-width="1.3"/></svg>
<svg class="a" style="left:642px;top:482px" width="13" height="13" viewBox="0 0 13 13"><path d="M1.5,1.5 L11.5,11.5 M11.5,1.5 L1.5,11.5" stroke="#c9281c" stroke-width="1.2"/></svg>
<svg class="a" style="left:110px;top:521px" width="20" height="25" viewBox="0 0 20 25"><path d="M6,4 L6,20.5 A8.3,8.3 0 0 1 6,4 Z" fill="#b91e12"/><rect x="5.8" y="4" width="3.3" height="16.5" fill="#b91e12"/><rect x="9" y="4" width="5" height="5.5" fill="#c84a40"/><rect x="9" y="9.5" width="5" height="5" fill="#e0908a"/><rect x="9" y="14.5" width="5" height="6" fill="#c0302a"/><rect x="14" y="4" width="5" height="5.5" fill="#cc6055"/><rect x="14" y="9.5" width="5" height="5" fill="#b91e12"/><rect x="14" y="14.5" width="5" height="6" fill="#cc6058"/><rect x="6" y="0" width="8" height="4" fill="#ecbcb8"/><rect x="6" y="20.5" width="8" height="4.5" fill="#ecbcb8"/></svg>
<div class="a" style="left:139px;top:526px;width:130px;height:15px"><div class="a" style="left:0;top:0;width:100%;height:5.00px;background:repeating-linear-gradient(90deg,#dcdcdf 0 5px,#d2d2d5 5px 10px,#e2e2e5 10px 15px,#d7d7da 15px 20px)"></div><div class="a" style="left:0;top:5.00px;width:100%;height:5.00px;background:repeating-linear-gradient(90deg,#7f7c80 0 5px,#636064 5px 10px,#8f8c90 10px 15px,#716e72 15px 20px)"></div><div class="a" style="left:0;top:10.00px;width:100%;height:5.00px;background:repeating-linear-gradient(90deg,#d9dade 0 5px,#cfd0d4 5px 10px,#dfe0e4 10px 15px,#d4d5d9 15px 20px)"></div></div>
<div class="a" style="left:283px;top:527px;width:26px;height:15px"><div class="a" style="left:0;top:0;width:100%;height:5.00px;background:repeating-linear-gradient(90deg,#dcdcdf 0 5px,#d2d2d5 5px 10px,#e2e2e5 10px 15px,#d7d7da 15px 20px)"></div><div class="a" style="left:0;top:5.00px;width:100%;height:5.00px;background:repeating-linear-gradient(90deg,#7f7c80 0 5px,#636064 5px 10px,#8f8c90 10px 15px,#716e72 15px 20px)"></div><div class="a" style="left:0;top:10.00px;width:100%;height:5.00px;background:repeating-linear-gradient(90deg,#d9dade 0 5px,#cfd0d4 5px 10px,#dfe0e4 10px 15px,#d4d5d9 15px 20px)"></div></div>
<div class="a" style="left:314px;top:527px;width:35px;height:15px"><div class="a" style="left:0;top:0;width:100%;height:5.00px;background:repeating-linear-gradient(90deg,#dcdcdf 0 5px,#d2d2d5 5px 10px,#e2e2e5 10px 15px,#d7d7da 15px 20px)"></div><div class="a" style="left:0;top:5.00px;width:100%;height:5.00px;background:repeating-linear-gradient(90deg,#7f7c80 0 5px,#636064 5px 10px,#8f8c90 10px 15px,#716e72 15px 20px)"></div><div class="a" style="left:0;top:10.00px;width:100%;height:5.00px;background:repeating-linear-gradient(90deg,#d9dade 0 5px,#cfd0d4 5px 10px,#dfe0e4 10px 15px,#d4d5d9 15px 20px)"></div></div>
<div class="a" style="left:354px;top:527px;width:55px;height:15px"><div class="a" style="left:0;top:0;width:100%;height:5.00px;background:repeating-linear-gradient(90deg,#dcdcdf 0 5px,#d2d2d5 5px 10px,#e2e2e5 10px 15px,#d7d7da 15px 20px)"></div><div class="a" style="left:0;top:5.00px;width:100%;height:5.00px;background:repeating-linear-gradient(90deg,#7f7c80 0 5px,#636064 5px 10px,#8f8c90 10px 15px,#716e72 15px 20px)"></div><div class="a" style="left:0;top:10.00px;width:100%;height:5.00px;background:repeating-linear-gradient(90deg,#d9dade 0 5px,#cfd0d4 5px 10px,#dfe0e4 10px 15px,#d4d5d9 15px 20px)"></div></div>
<div class="a" style="left:423px;top:526px;width:86px;height:10px"><div class="a" style="left:0;top:0;width:100%;height:5.00px;background:repeating-linear-gradient(90deg,#a7a4a8 0 5px,#918e92 5px 10px,#b4b1b5 10px 15px,#9c999d 15px 20px)"></div><div class="a" style="left:0;top:5.00px;width:100%;height:5.00px;background:repeating-linear-gradient(90deg,#e2e2e2 0 5px,#d6d6d6 5px 10px,#e9e9e9 10px 15px,#dcdcdc 15px 20px)"></div></div>
<div class="a" style="left:513px;top:526px;width:10px;height:10px"><div class="a" style="left:0;top:0;width:100%;height:100%;background:#a7a4a8"></div></div>
<svg class="a" style="left:613px;top:527px" width="16" height="14" viewBox="0 0 16 14"><rect x="1" y="6" width="5" height="8" fill="#e4f2dc"/><path d="M6,11 L14.5,2.5" stroke="#6cc04a" stroke-width="1.3"/></svg>
<svg class="a" style="left:642px;top:527px" width="13" height="13" viewBox="0 0 13 13"><path d="M1.5,1.5 L11.5,11.5 M11.5,1.5 L1.5,11.5" stroke="#c9281c" stroke-width="1.2"/></svg>
<div class="a" style="left:673px;top:314px;width:17px;height:242px;background:#f0f0f0"></div>
<div class="a" style="left:673px;top:505px;width:17px;height:16px;background:#c9c9c9"></div>
<svg class="a" style="left:677px;top:320px" width="10" height="6" viewBox="0 0 10 6"><path d="M1,5.5 L5,1.5 L9,5.5" fill="none" stroke="#8a8a8a" stroke-width="1.1"/></svg>
<svg class="a" style="left:677px;top:546px" width="10" height="6" viewBox="0 0 10 6"><path d="M1,0.5 L5,4.5 L9,0.5" fill="none" stroke="#8a8a8a" stroke-width="1.1"/></svg>
<div class="card" style="left:713px;top:190px;width:601px;height:372px"></div>
<div class="a" style="left:731px;top:206px;width:40px;height:40px;border-radius:50%;background:#a6b1bf"></div>
<svg class="a" style="left:731px;top:206px" width="40" height="40" viewBox="0 0 40 40"><circle cx="16.3" cy="16.3" r="5.6" fill="#fff"/><path d="M17,17 L27.6,27.6" stroke="#fff" stroke-width="3.9"/><path d="M10.2,10.2 L15.2,15.2" stroke="#a6b1bf" stroke-width="3.4"/></svg>
<div class="t" style="left:781px;top:219.42px;font-size:17.45px;color:#0a6db0;font-weight:bold;">Rapports sous garantie en cours</div>
<div class="a" style="left:721px;top:253px;width:587px;height:3px;background:#0a6fb5"></div>
<svg class="a" style="left:1272.5px;top:213.5px" width="27" height="27" viewBox="0 0 24 24"><path d="M10.3,2 L13.7,2 L14.3,4.8 C15,5.1 15.7,5.5 16.3,6 L19,5 L20.7,8 L18.6,9.9 C18.7,10.6 18.7,11.4 18.6,12.1 L20.7,14 L19,17 L16.3,16 C15.7,16.5 15,16.9 14.3,17.2 L13.7,20 L10.3,20 L9.7,17.2 C9,16.9 8.3,16.5 7.7,16 L5,17 L3.3,14 L5.4,12.1 C5.3,11.4 5.3,10.6 5.4,9.9 L3.3,8 L5,5 L7.7,6 C8.3,5.5 9,5.1 9.7,4.8 Z" fill="none" stroke="#2f4a6a" stroke-width="1.6" stroke-linejoin="round"/><circle cx="12" cy="11" r="3.2" fill="none" stroke="#2f4a6a" stroke-width="1.6"/></svg>
<div class="a" style="left:718px;top:268px;width:592px;height:289px;background:#fff;border:1px solid #d0d0d0"></div>
<div class="a" style="left:719px;top:311px;width:590px;height:3px;background:#2f4a6a"></div>
<div class="t" style="left:729px;top:285.67px;font-size:12.2px;color:#2c4b70;font-weight:normal;">Réf. Agora</div>
<svg class="a" style="left:791px;top:285px" width="12" height="13" viewBox="0 0 12 13"><path d="M1.6,1.7 L10.4,1.7 L7.1,6.3 L7.1,12.2 L5,9.9 L5,6.3 Z" fill="none" stroke="#727272" stroke-width="1.25" stroke-linejoin="miter"/></svg>
<div class="t" style="left:819px;top:285.67px;font-size:12.2px;color:#2c4b70;font-weight:normal;">Constructeur</div>
<svg class="a" style="left:900px;top:285px" width="12" height="13" viewBox="0 0 12 13"><path d="M1.6,1.7 L10.4,1.7 L7.1,6.3 L7.1,12.2 L5,9.9 L5,6.3 Z" fill="none" stroke="#727272" stroke-width="1.25" stroke-linejoin="miter"/></svg>
<div class="t" style="left:929px;top:285.67px;font-size:12.2px;color:#2c4b70;font-weight:normal;">Marque</div>
<svg class="a" style="left:990px;top:285px" width="12" height="13" viewBox="0 0 12 13"><path d="M1.6,1.7 L10.4,1.7 L7.1,6.3 L7.1,12.2 L5,9.9 L5,6.3 Z" fill="none" stroke="#727272" stroke-width="1.25" stroke-linejoin="miter"/></svg>
<div class="t" style="left:1019px;top:285.67px;font-size:12.2px;color:#2c4b70;font-weight:normal;">Famille</div>
<svg class="a" style="left:1100px;top:285px" width="12" height="13" viewBox="0 0 12 13"><path d="M1.6,1.7 L10.4,1.7 L7.1,6.3 L7.1,12.2 L5,9.9 L5,6.3 Z" fill="none" stroke="#727272" stroke-width="1.25" stroke-linejoin="miter"/></svg>
<div class="t" style="left:1129px;top:285.67px;font-size:12.2px;color:#2c4b70;font-weight:normal;">Statut</div>
<svg class="a" style="left:1290px;top:285px" width="12" height="13" viewBox="0 0 12 13"><path d="M1.6,1.7 L10.4,1.7 L7.1,6.3 L7.1,12.2 L5,9.9 L5,6.3 Z" fill="none" stroke="#727272" stroke-width="1.25" stroke-linejoin="miter"/></svg>
<div class="a" style="left:719px;top:358px;width:8px;height:1px;background:#c4c4c4"></div>
<div class="a" style="left:1123px;top:358px;width:169px;height:1px;background:#c4c4c4"></div>
<div class="a" style="left:727px;top:355px;width:396px;height:4px;background:rgba(0,0,0,.065)"></div>
<div class="a" style="left:719px;top:403px;width:8px;height:1px;background:#c4c4c4"></div>
<div class="a" style="left:1123px;top:403px;width:169px;height:1px;background:#c4c4c4"></div>
<div class="a" style="left:727px;top:400px;width:396px;height:4px;background:rgba(0,0,0,.065)"></div>
<div class="a" style="left:719px;top:448px;width:8px;height:1px;background:#c4c4c4"></div>
<div class="a" style="left:1123px;top:448px;width:169px;height:1px;background:#c4c4c4"></div>
<div class="a" style="left:727px;top:445px;width:396px;height:4px;background:rgba(0,0,0,.065)"></div>
<div class="a" style="left:719px;top:493px;width:8px;height:1px;background:#c4c4c4"></div>
<div class="a" style="left:1123px;top:493px;width:169px;height:1px;background:#c4c4c4"></div>
<div class="a" style="left:727px;top:490px;width:396px;height:4px;background:rgba(0,0,0,.065)"></div>
<div class="a" style="left:719px;top:538px;width:8px;height:1px;background:#c4c4c4"></div>
<div class="a" style="left:1123px;top:538px;width:169px;height:1px;background:#c4c4c4"></div>
<div class="a" style="left:727px;top:535px;width:396px;height:4px;background:rgba(0,0,0,.065)"></div>
<div class="a" style="left:730px;top:330px;width:45px;height:15px"><div class="a" style="left:0;top:0;width:100%;height:5.00px;background:repeating-linear-gradient(90deg,#cfcfd2 0 5px,#c5c5c8 5px 10px,#d5d5d8 10px 15px,#cacacd 15px 20px)"></div><div class="a" style="left:0;top:5.00px;width:100%;height:5.00px;background:repeating-linear-gradient(90deg,#b9b7bb 0 5px,#9d9b9f 5px 10px,#c9c7cb 10px 15px,#aba9ad 15px 20px)"></div><div class="a" style="left:0;top:10.00px;width:100%;height:5.00px;background:repeating-linear-gradient(90deg,#e2e2e6 0 5px,#d8d8dc 5px 10px,#e8e8ec 10px 15px,#dddde1 15px 20px)"></div></div>
<div class="a" style="left:835px;top:326px;width:30px;height:5px;background:#cfe6f0"></div>
<div class="a" style="left:835px;top:331px;width:30px;height:5px;background:#a9d5e6"></div>
<div class="a" style="left:870px;top:326px;width:30px;height:5px;background:#e8cfd2"></div>
<div class="a" style="left:870px;top:331px;width:10px;height:5px;background:#d8737d"></div>
<div class="a" style="left:880px;top:331px;width:20px;height:5px;background:#a4a4a4"></div>
<div class="a" style="left:820px;top:341px;width:35px;height:5px;background:#a6dbee"></div>
<div class="a" style="left:855px;top:341px;width:25px;height:5px;background:#dcdcdc"></div>
<div class="a" style="left:880px;top:341px;width:35px;height:5px;background:#f2a6b1"></div>
<div class="a" style="left:929px;top:331px;width:46px;height:10px"><div class="a" style="left:0;top:0;width:100%;height:5.00px;background:repeating-linear-gradient(90deg,#9e9a9e 0 5px,#888488 5px 10px,#aba7ab 10px 15px,#938f93 15px 20px)"></div><div class="a" style="left:0;top:5.00px;width:100%;height:5.00px;background:repeating-linear-gradient(90deg,#d8d8d8 0 5px,#cccccc 5px 10px,#dfdfdf 10px 15px,#d2d2d2 15px 20px)"></div></div>
<div class="a" style="left:1020px;top:331px;width:100px;height:10px"><div class="a" style="left:0;top:0;width:100%;height:5.00px;background:repeating-linear-gradient(90deg,#a29ea3 0 5px,#8c888d 5px 10px,#afabb0 10px 15px,#979398 15px 20px)"></div><div class="a" style="left:0;top:5.00px;width:100%;height:5.00px;background:repeating-linear-gradient(90deg,#d6d3d6 0 5px,#cac7ca 5px 10px,#dddadd 10px 15px,#d0cdd0 15px 20px)"></div></div>
<div class="t" style="left:1129px;top:330.58px;font-size:12.3px;color:#6cb24e;font-weight:normal;letter-spacing:0.3px;-webkit-text-stroke:0.3px #6cb24e">Valide (non transmis)</div>
<div class="a" style="left:730px;top:375px;width:45px;height:15px"><div class="a" style="left:0;top:0;width:100%;height:5.00px;background:repeating-linear-gradient(90deg,#cfcfd2 0 5px,#c5c5c8 5px 10px,#d5d5d8 10px 15px,#cacacd 15px 20px)"></div><div class="a" style="left:0;top:5.00px;width:100%;height:5.00px;background:repeating-linear-gradient(90deg,#b9b7bb 0 5px,#9d9b9f 5px 10px,#c9c7cb 10px 15px,#aba9ad 15px 20px)"></div><div class="a" style="left:0;top:10.00px;width:100%;height:5.00px;background:repeating-linear-gradient(90deg,#e2e2e6 0 5px,#d8d8dc 5px 10px,#e8e8ec 10px 15px,#dddde1 15px 20px)"></div></div>
<svg class="a" style="left:815px;top:366px" width="105" height="30" viewBox="0 0 105 30"><rect x="0" y="0" width="5" height="5" fill="rgb(235,235,235)"/><rect x="5" y="0" width="5" height="5" fill="rgb(170,170,170)"/><rect x="10" y="0" width="5" height="5" fill="rgb(185,185,185)"/><rect x="15" y="0" width="5" height="5" fill="rgb(240,240,240)"/><rect x="30" y="0" width="5" height="5" fill="rgb(165,165,165)"/><rect x="40" y="0" width="5" height="5" fill="rgb(175,175,175)"/><rect x="45" y="0" width="5" height="5" fill="rgb(180,180,180)"/><rect x="60" y="0" width="5" height="5" fill="rgb(225,225,225)"/><rect x="65" y="0" width="5" height="5" fill="rgb(200,200,200)"/><rect x="70" y="0" width="5" height="5" fill="rgb(220,220,220)"/><rect x="80" y="0" width="5" height="5" fill="rgb(240,240,240)"/><rect x="85" y="0" width="5" height="5" fill="rgb(230,230,230)"/><rect x="100" y="0" width="5" height="5" fill="rgb(165,165,165)"/><rect x="0" y="5" width="5" height="5" fill="rgb(200,200,200)"/><rect x="5" y="5" width="5" height="5" fill="rgb(105,105,105)"/><rect x="10" y="5" width="5" height="5" fill="rgb(175,175,175)"/><rect x="15" y="5" width="5" height="5" fill="rgb(80,80,80)"/><rect x="30" y="5" width="5" height="5" fill="rgb(150,150,150)"/><rect x="35" y="5" width="5" height="5" fill="rgb(120,120,120)"/><rect x="40" y="5" width="5" height="5" fill="rgb(165,165,165)"/><rect x="45" y="5" width="5" height="5" fill="rgb(170,170,170)"/><rect x="50" y="5" width="5" height="5" fill="rgb(220,220,220)"/><rect x="60" y="5" width="5" height="5" fill="rgb(150,150,150)"/><rect x="70" y="5" width="5" height="5" fill="rgb(85,85,85)"/><rect x="80" y="5" width="5" height="5" fill="rgb(210,210,210)"/><rect x="85" y="5" width="5" height="5" fill="rgb(130,130,130)"/><rect x="95" y="5" width="5" height="5" fill="rgb(225,225,225)"/><rect x="100" y="5" width="5" height="5" fill="rgb(170,170,170)"/><rect x="0" y="10" width="5" height="5" fill="rgb(200,200,200)"/><rect x="5" y="10" width="5" height="5" fill="rgb(100,100,100)"/><rect x="10" y="10" width="5" height="5" fill="rgb(170,170,170)"/><rect x="15" y="10" width="5" height="5" fill="rgb(105,105,105)"/><rect x="25" y="10" width="5" height="5" fill="rgb(190,190,190)"/><rect x="30" y="10" width="5" height="5" fill="rgb(220,220,220)"/><rect x="35" y="10" width="5" height="5" fill="rgb(120,120,120)"/><rect x="40" y="10" width="5" height="5" fill="rgb(120,120,120)"/><rect x="45" y="10" width="5" height="5" fill="rgb(230,230,230)"/><rect x="60" y="10" width="5" height="5" fill="rgb(150,150,150)"/><rect x="70" y="10" width="5" height="5" fill="rgb(85,85,85)"/><rect x="75" y="10" width="5" height="5" fill="rgb(160,160,160)"/><rect x="80" y="10" width="5" height="5" fill="rgb(140,140,140)"/><rect x="85" y="10" width="5" height="5" fill="rgb(130,130,130)"/><rect x="95" y="10" width="5" height="5" fill="rgb(160,160,160)"/><rect x="0" y="15" width="5" height="5" fill="rgb(200,200,200)"/><rect x="5" y="15" width="5" height="5" fill="rgb(100,100,100)"/><rect x="10" y="15" width="5" height="5" fill="rgb(170,170,170)"/><rect x="15" y="15" width="5" height="5" fill="rgb(90,90,90)"/><rect x="25" y="15" width="5" height="5" fill="rgb(160,160,160)"/><rect x="40" y="15" width="5" height="5" fill="rgb(190,190,190)"/><rect x="45" y="15" width="5" height="5" fill="rgb(60,60,60)"/><rect x="50" y="15" width="5" height="5" fill="rgb(185,185,185)"/><rect x="55" y="15" width="5" height="5" fill="rgb(180,180,180)"/><rect x="60" y="15" width="5" height="5" fill="rgb(215,215,215)"/><rect x="70" y="15" width="5" height="5" fill="rgb(85,85,85)"/><rect x="80" y="15" width="5" height="5" fill="rgb(190,190,190)"/><rect x="85" y="15" width="5" height="5" fill="rgb(130,130,130)"/><rect x="95" y="15" width="5" height="5" fill="rgb(160,160,160)"/><rect x="0" y="20" width="5" height="5" fill="rgb(200,200,200)"/><rect x="5" y="20" width="5" height="5" fill="rgb(125,125,125)"/><rect x="15" y="20" width="5" height="5" fill="rgb(75,75,75)"/><rect x="20" y="20" width="5" height="5" fill="rgb(230,230,230)"/><rect x="25" y="20" width="5" height="5" fill="rgb(160,160,160)"/><rect x="35" y="20" width="5" height="5" fill="rgb(215,215,215)"/><rect x="45" y="20" width="5" height="5" fill="rgb(160,160,160)"/><rect x="50" y="20" width="5" height="5" fill="rgb(160,160,160)"/><rect x="55" y="20" width="5" height="5" fill="rgb(160,160,160)"/><rect x="70" y="20" width="5" height="5" fill="rgb(85,85,85)"/><rect x="80" y="20" width="5" height="5" fill="rgb(210,210,210)"/><rect x="85" y="20" width="5" height="5" fill="rgb(130,130,130)"/><rect x="90" y="20" width="5" height="5" fill="rgb(200,200,200)"/><rect x="95" y="20" width="5" height="5" fill="rgb(225,225,225)"/><rect x="0" y="25" width="5" height="5" fill="rgb(230,230,230)"/><rect x="5" y="25" width="5" height="5" fill="rgb(100,100,100)"/><rect x="10" y="25" width="5" height="5" fill="rgb(100,100,100)"/><rect x="15" y="25" width="5" height="5" fill="rgb(200,200,200)"/><rect x="20" y="25" width="5" height="5" fill="rgb(160,160,160)"/><rect x="25" y="25" width="5" height="5" fill="rgb(240,240,240)"/><rect x="35" y="25" width="5" height="5" fill="rgb(180,180,180)"/><rect x="40" y="25" width="5" height="5" fill="rgb(105,105,105)"/><rect x="45" y="25" width="5" height="5" fill="rgb(140,140,140)"/><rect x="50" y="25" width="5" height="5" fill="rgb(240,240,240)"/><rect x="55" y="25" width="5" height="5" fill="rgb(170,170,170)"/><rect x="70" y="25" width="5" height="5" fill="rgb(170,170,170)"/><rect x="80" y="25" width="5" height="5" fill="rgb(235,235,235)"/><rect x="85" y="25" width="5" height="5" fill="rgb(190,190,190)"/><rect x="90" y="25" width="5" height="5" fill="rgb(160,160,160)"/></svg>
<div class="a" style="left:1020px;top:376px;width:75px;height:10px"><div class="a" style="left:0;top:0;width:100%;height:5.00px;background:repeating-linear-gradient(90deg,#a9a6a9 0 5px,#939093 5px 10px,#b6b3b6 10px 15px,#9e9b9e 15px 20px)"></div><div class="a" style="left:0;top:5.00px;width:100%;height:5.00px;background:repeating-linear-gradient(90deg,#dcdadc 0 5px,#d0ced0 5px 10px,#e3e1e3 10px 15px,#d6d4d6 15px 20px)"></div></div>
<div class="t" style="left:1129px;top:376.42px;font-size:11.9px;color:#000;font-weight:bold;">Non valide (non transmis)</div>
<div class="a" style="left:730px;top:420px;width:45px;height:15px"><div class="a" style="left:0;top:0;width:100%;height:5.00px;background:repeating-linear-gradient(90deg,#cfcfd2 0 5px,#c5c5c8 5px 10px,#d5d5d8 10px 15px,#cacacd 15px 20px)"></div><div class="a" style="left:0;top:5.00px;width:100%;height:5.00px;background:repeating-linear-gradient(90deg,#b9b7bb 0 5px,#9d9b9f 5px 10px,#c9c7cb 10px 15px,#aba9ad 15px 20px)"></div><div class="a" style="left:0;top:10.00px;width:100%;height:5.00px;background:repeating-linear-gradient(90deg,#e2e2e6 0 5px,#d8d8dc 5px 10px,#e8e8ec 10px 15px,#dddde1 15px 20px)"></div></div>
<svg class="a" style="left:815px;top:411px" width="105" height="30" viewBox="0 0 105 30"><rect x="0" y="0" width="5" height="5" fill="rgb(235,235,235)"/><rect x="5" y="0" width="5" height="5" fill="rgb(170,170,170)"/><rect x="10" y="0" width="5" height="5" fill="rgb(185,185,185)"/><rect x="15" y="0" width="5" height="5" fill="rgb(240,240,240)"/><rect x="30" y="0" width="5" height="5" fill="rgb(165,165,165)"/><rect x="40" y="0" width="5" height="5" fill="rgb(175,175,175)"/><rect x="45" y="0" width="5" height="5" fill="rgb(180,180,180)"/><rect x="60" y="0" width="5" height="5" fill="rgb(225,225,225)"/><rect x="65" y="0" width="5" height="5" fill="rgb(200,200,200)"/><rect x="70" y="0" width="5" height="5" fill="rgb(220,220,220)"/><rect x="80" y="0" width="5" height="5" fill="rgb(240,240,240)"/><rect x="85" y="0" width="5" height="5" fill="rgb(230,230,230)"/><rect x="100" y="0" width="5" height="5" fill="rgb(165,165,165)"/><rect x="0" y="5" width="5" height="5" fill="rgb(200,200,200)"/><rect x="5" y="5" width="5" height="5" fill="rgb(105,105,105)"/><rect x="10" y="5" width="5" height="5" fill="rgb(175,175,175)"/><rect x="15" y="5" width="5" height="5" fill="rgb(80,80,80)"/><rect x="30" y="5" width="5" height="5" fill="rgb(150,150,150)"/><rect x="35" y="5" width="5" height="5" fill="rgb(120,120,120)"/><rect x="40" y="5" width="5" height="5" fill="rgb(165,165,165)"/><rect x="45" y="5" width="5" height="5" fill="rgb(170,170,170)"/><rect x="50" y="5" width="5" height="5" fill="rgb(220,220,220)"/><rect x="60" y="5" width="5" height="5" fill="rgb(150,150,150)"/><rect x="70" y="5" width="5" height="5" fill="rgb(85,85,85)"/><rect x="80" y="5" width="5" height="5" fill="rgb(210,210,210)"/><rect x="85" y="5" width="5" height="5" fill="rgb(130,130,130)"/><rect x="95" y="5" width="5" height="5" fill="rgb(225,225,225)"/><rect x="100" y="5" width="5" height="5" fill="rgb(170,170,170)"/><rect x="0" y="10" width="5" height="5" fill="rgb(200,200,200)"/><rect x="5" y="10" width="5" height="5" fill="rgb(100,100,100)"/><rect x="10" y="10" width="5" height="5" fill="rgb(170,170,170)"/><rect x="15" y="10" width="5" height="5" fill="rgb(105,105,105)"/><rect x="25" y="10" width="5" height="5" fill="rgb(190,190,190)"/><rect x="30" y="10" width="5" height="5" fill="rgb(220,220,220)"/><rect x="35" y="10" width="5" height="5" fill="rgb(120,120,120)"/><rect x="40" y="10" width="5" height="5" fill="rgb(120,120,120)"/><rect x="45" y="10" width="5" height="5" fill="rgb(230,230,230)"/><rect x="60" y="10" width="5" height="5" fill="rgb(150,150,150)"/><rect x="70" y="10" width="5" height="5" fill="rgb(85,85,85)"/><rect x="75" y="10" width="5" height="5" fill="rgb(160,160,160)"/><rect x="80" y="10" width="5" height="5" fill="rgb(140,140,140)"/><rect x="85" y="10" width="5" height="5" fill="rgb(130,130,130)"/><rect x="95" y="10" width="5" height="5" fill="rgb(160,160,160)"/><rect x="0" y="15" width="5" height="5" fill="rgb(200,200,200)"/><rect x="5" y="15" width="5" height="5" fill="rgb(100,100,100)"/><rect x="10" y="15" width="5" height="5" fill="rgb(170,170,170)"/><rect x="15" y="15" width="5" height="5" fill="rgb(90,90,90)"/><rect x="25" y="15" width="5" height="5" fill="rgb(160,160,160)"/><rect x="40" y="15" width="5" height="5" fill="rgb(190,190,190)"/><rect x="45" y="15" width="5" height="5" fill="rgb(60,60,60)"/><rect x="50" y="15" width="5" height="5" fill="rgb(185,185,185)"/><rect x="55" y="15" width="5" height="5" fill="rgb(180,180,180)"/><rect x="60" y="15" width="5" height="5" fill="rgb(215,215,215)"/><rect x="70" y="15" width="5" height="5" fill="rgb(85,85,85)"/><rect x="80" y="15" width="5" height="5" fill="rgb(190,190,190)"/><rect x="85" y="15" width="5" height="5" fill="rgb(130,130,130)"/><rect x="95" y="15" width="5" height="5" fill="rgb(160,160,160)"/><rect x="0" y="20" width="5" height="5" fill="rgb(200,200,200)"/><rect x="5" y="20" width="5" height="5" fill="rgb(125,125,125)"/><rect x="15" y="20" width="5" height="5" fill="rgb(75,75,75)"/><rect x="20" y="20" width="5" height="5" fill="rgb(230,230,230)"/><rect x="25" y="20" width="5" height="5" fill="rgb(160,160,160)"/><rect x="35" y="20" width="5" height="5" fill="rgb(215,215,215)"/><rect x="45" y="20" width="5" height="5" fill="rgb(160,160,160)"/><rect x="50" y="20" width="5" height="5" fill="rgb(160,160,160)"/><rect x="55" y="20" width="5" height="5" fill="rgb(160,160,160)"/><rect x="70" y="20" width="5" height="5" fill="rgb(85,85,85)"/><rect x="80" y="20" width="5" height="5" fill="rgb(210,210,210)"/><rect x="85" y="20" width="5" height="5" fill="rgb(130,130,130)"/><rect x="90" y="20" width="5" height="5" fill="rgb(200,200,200)"/><rect x="95" y="20" width="5" height="5" fill="rgb(225,225,225)"/><rect x="0" y="25" width="5" height="5" fill="rgb(230,230,230)"/><rect x="5" y="25" width="5" height="5" fill="rgb(100,100,100)"/><rect x="10" y="25" width="5" height="5" fill="rgb(100,100,100)"/><rect x="15" y="25" width="5" height="5" fill="rgb(200,200,200)"/><rect x="20" y="25" width="5" height="5" fill="rgb(160,160,160)"/><rect x="25" y="25" width="5" height="5" fill="rgb(240,240,240)"/><rect x="35" y="25" width="5" height="5" fill="rgb(180,180,180)"/><rect x="40" y="25" width="5" height="5" fill="rgb(105,105,105)"/><rect x="45" y="25" width="5" height="5" fill="rgb(140,140,140)"/><rect x="50" y="25" width="5" height="5" fill="rgb(240,240,240)"/><rect x="55" y="25" width="5" height="5" fill="rgb(170,170,170)"/><rect x="70" y="25" width="5" height="5" fill="rgb(170,170,170)"/><rect x="80" y="25" width="5" height="5" fill="rgb(235,235,235)"/><rect x="85" y="25" width="5" height="5" fill="rgb(190,190,190)"/><rect x="90" y="25" width="5" height="5" fill="rgb(160,160,160)"/></svg>
<div class="t" style="left:1129px;top:421.42px;font-size:11.9px;color:#000;font-weight:bold;">Non valide (non transmis)</div>
<div class="a" style="left:730px;top:465px;width:45px;height:15px"><div class="a" style="left:0;top:0;width:100%;height:5.00px;background:repeating-linear-gradient(90deg,#cfcfd2 0 5px,#c5c5c8 5px 10px,#d5d5d8 10px 15px,#cacacd 15px 20px)"></div><div class="a" style="left:0;top:5.00px;width:100%;height:5.00px;background:repeating-linear-gradient(90deg,#b9b7bb 0 5px,#9d9b9f 5px 10px,#c9c7cb 10px 15px,#aba9ad 15px 20px)"></div><div class="a" style="left:0;top:10.00px;width:100%;height:5.00px;background:repeating-linear-gradient(90deg,#e2e2e6 0 5px,#d8d8dc 5px 10px,#e8e8ec 10px 15px,#dddde1 15px 20px)"></div></div>
<svg class="a" style="left:815px;top:456px" width="105" height="30" viewBox="0 0 105 30"><rect x="0" y="0" width="5" height="5" fill="rgb(235,235,235)"/><rect x="5" y="0" width="5" height="5" fill="rgb(170,170,170)"/><rect x="10" y="0" width="5" height="5" fill="rgb(185,185,185)"/><rect x="15" y="0" width="5" height="5" fill="rgb(240,240,240)"/><rect x="30" y="0" width="5" height="5" fill="rgb(165,165,165)"/><rect x="40" y="0" width="5" height="5" fill="rgb(175,175,175)"/><rect x="45" y="0" width="5" height="5" fill="rgb(180,180,180)"/><rect x="60" y="0" width="5" height="5" fill="rgb(225,225,225)"/><rect x="65" y="0" width="5" height="5" fill="rgb(200,200,200)"/><rect x="70" y="0" width="5" height="5" fill="rgb(220,220,220)"/><rect x="80" y="0" width="5" height="5" fill="rgb(240,240,240)"/><rect x="85" y="0" width="5" height="5" fill="rgb(230,230,230)"/><rect x="100" y="0" width="5" height="5" fill="rgb(165,165,165)"/><rect x="0" y="5" width="5" height="5" fill="rgb(200,200,200)"/><rect x="5" y="5" width="5" height="5" fill="rgb(105,105,105)"/><rect x="10" y="5" width="5" height="5" fill="rgb(175,175,175)"/><rect x="15" y="5" width="5" height="5" fill="rgb(80,80,80)"/><rect x="30" y="5" width="5" height="5" fill="rgb(150,150,150)"/><rect x="35" y="5" width="5" height="5" fill="rgb(120,120,120)"/><rect x="40" y="5" width="5" height="5" fill="rgb(165,165,165)"/><rect x="45" y="5" width="5" height="5" fill="rgb(170,170,170)"/><rect x="50" y="5" width="5" height="5" fill="rgb(220,220,220)"/><rect x="60" y="5" width="5" height="5" fill="rgb(150,150,150)"/><rect x="70" y="5" width="5" height="5" fill="rgb(85,85,85)"/><rect x="80" y="5" width="5" height="5" fill="rgb(210,210,210)"/><rect x="85" y="5" width="5" height="5" fill="rgb(130,130,130)"/><rect x="95" y="5" width="5" height="5" fill="rgb(225,225,225)"/><rect x="100" y="5" width="5" height="5" fill="rgb(170,170,170)"/><rect x="0" y="10" width="5" height="5" fill="rgb(200,200,200)"/><rect x="5" y="10" width="5" height="5" fill="rgb(100,100,100)"/><rect x="10" y="10" width="5" height="5" fill="rgb(170,170,170)"/><rect x="15" y="10" width="5" height="5" fill="rgb(105,105,105)"/><rect x="25" y="10" width="5" height="5" fill="rgb(190,190,190)"/><rect x="30" y="10" width="5" height="5" fill="rgb(220,220,220)"/><rect x="35" y="10" width="5" height="5" fill="rgb(120,120,120)"/><rect x="40" y="10" width="5" height="5" fill="rgb(120,120,120)"/><rect x="45" y="10" width="5" height="5" fill="rgb(230,230,230)"/><rect x="60" y="10" width="5" height="5" fill="rgb(150,150,150)"/><rect x="70" y="10" width="5" height="5" fill="rgb(85,85,85)"/><rect x="75" y="10" width="5" height="5" fill="rgb(160,160,160)"/><rect x="80" y="10" width="5" height="5" fill="rgb(140,140,140)"/><rect x="85" y="10" width="5" height="5" fill="rgb(130,130,130)"/><rect x="95" y="10" width="5" height="5" fill="rgb(160,160,160)"/><rect x="0" y="15" width="5" height="5" fill="rgb(200,200,200)"/><rect x="5" y="15" width="5" height="5" fill="rgb(100,100,100)"/><rect x="10" y="15" width="5" height="5" fill="rgb(170,170,170)"/><rect x="15" y="15" width="5" height="5" fill="rgb(90,90,90)"/><rect x="25" y="15" width="5" height="5" fill="rgb(160,160,160)"/><rect x="40" y="15" width="5" height="5" fill="rgb(190,190,190)"/><rect x="45" y="15" width="5" height="5" fill="rgb(60,60,60)"/><rect x="50" y="15" width="5" height="5" fill="rgb(185,185,185)"/><rect x="55" y="15" width="5" height="5" fill="rgb(180,180,180)"/><rect x="60" y="15" width="5" height="5" fill="rgb(215,215,215)"/><rect x="70" y="15" width="5" height="5" fill="rgb(85,85,85)"/><rect x="80" y="15" width="5" height="5" fill="rgb(190,190,190)"/><rect x="85" y="15" width="5" height="5" fill="rgb(130,130,130)"/><rect x="95" y="15" width="5" height="5" fill="rgb(160,160,160)"/><rect x="0" y="20" width="5" height="5" fill="rgb(200,200,200)"/><rect x="5" y="20" width="5" height="5" fill="rgb(125,125,125)"/><rect x="15" y="20" width="5" height="5" fill="rgb(75,75,75)"/><rect x="20" y="20" width="5" height="5" fill="rgb(230,230,230)"/><rect x="25" y="20" width="5" height="5" fill="rgb(160,160,160)"/><rect x="35" y="20" width="5" height="5" fill="rgb(215,215,215)"/><rect x="45" y="20" width="5" height="5" fill="rgb(160,160,160)"/><rect x="50" y="20" width="5" height="5" fill="rgb(160,160,160)"/><rect x="55" y="20" width="5" height="5" fill="rgb(160,160,160)"/><rect x="70" y="20" width="5" height="5" fill="rgb(85,85,85)"/><rect x="80" y="20" width="5" height="5" fill="rgb(210,210,210)"/><rect x="85" y="20" width="5" height="5" fill="rgb(130,130,130)"/><rect x="90" y="20" width="5" height="5" fill="rgb(200,200,200)"/><rect x="95" y="20" width="5" height="5" fill="rgb(225,225,225)"/><rect x="0" y="25" width="5" height="5" fill="rgb(230,230,230)"/><rect x="5" y="25" width="5" height="5" fill="rgb(100,100,100)"/><rect x="10" y="25" width="5" height="5" fill="rgb(100,100,100)"/><rect x="15" y="25" width="5" height="5" fill="rgb(200,200,200)"/><rect x="20" y="25" width="5" height="5" fill="rgb(160,160,160)"/><rect x="25" y="25" width="5" height="5" fill="rgb(240,240,240)"/><rect x="35" y="25" width="5" height="5" fill="rgb(180,180,180)"/><rect x="40" y="25" width="5" height="5" fill="rgb(105,105,105)"/><rect x="45" y="25" width="5" height="5" fill="rgb(140,140,140)"/><rect x="50" y="25" width="5" height="5" fill="rgb(240,240,240)"/><rect x="55" y="25" width="5" height="5" fill="rgb(170,170,170)"/><rect x="70" y="25" width="5" height="5" fill="rgb(170,170,170)"/><rect x="80" y="25" width="5" height="5" fill="rgb(235,235,235)"/><rect x="85" y="25" width="5" height="5" fill="rgb(190,190,190)"/><rect x="90" y="25" width="5" height="5" fill="rgb(160,160,160)"/></svg>
<div class="t" style="left:1129px;top:466.42px;font-size:11.9px;color:#000;font-weight:bold;">Non valide (non transmis)</div>
<div class="a" style="left:730px;top:510px;width:45px;height:15px"><div class="a" style="left:0;top:0;width:100%;height:5.00px;background:repeating-linear-gradient(90deg,#cfcfd2 0 5px,#c5c5c8 5px 10px,#d5d5d8 10px 15px,#cacacd 15px 20px)"></div><div class="a" style="left:0;top:5.00px;width:100%;height:5.00px;background:repeating-linear-gradient(90deg,#b9b7bb 0 5px,#9d9b9f 5px 10px,#c9c7cb 10px 15px,#aba9ad 15px 20px)"></div><div class="a" style="left:0;top:10.00px;width:100%;height:5.00px;background:repeating-linear-gradient(90deg,#e2e2e6 0 5px,#d8d8dc 5px 10px,#e8e8ec 10px 15px,#dddde1 15px 20px)"></div></div>
<svg class="a" style="left:815px;top:501px" width="105" height="30" viewBox="0 0 105 30"><rect x="0" y="0" width="5" height="5" fill="rgb(235,235,235)"/><rect x="5" y="0" width="5" height="5" fill="rgb(170,170,170)"/><rect x="10" y="0" width="5" height="5" fill="rgb(185,185,185)"/><rect x="15" y="0" width="5" height="5" fill="rgb(240,240,240)"/><rect x="30" y="0" width="5" height="5" fill="rgb(165,165,165)"/><rect x="40" y="0" width="5" height="5" fill="rgb(175,175,175)"/><rect x="45" y="0" width="5" height="5" fill="rgb(180,180,180)"/><rect x="60" y="0" width="5" height="5" fill="rgb(225,225,225)"/><rect x="65" y="0" width="5" height="5" fill="rgb(200,200,200)"/><rect x="70" y="0" width="5" height="5" fill="rgb(220,220,220)"/><rect x="80" y="0" width="5" height="5" fill="rgb(240,240,240)"/><rect x="85" y="0" width="5" height="5" fill="rgb(230,230,230)"/><rect x="100" y="0" width="5" height="5" fill="rgb(165,165,165)"/><rect x="0" y="5" width="5" height="5" fill="rgb(200,200,200)"/><rect x="5" y="5" width="5" height="5" fill="rgb(105,105,105)"/><rect x="10" y="5" width="5" height="5" fill="rgb(175,175,175)"/><rect x="15" y="5" width="5" height="5" fill="rgb(80,80,80)"/><rect x="30" y="5" width="5" height="5" fill="rgb(150,150,150)"/><rect x="35" y="5" width="5" height="5" fill="rgb(120,120,120)"/><rect x="40" y="5" width="5" height="5" fill="rgb(165,165,165)"/><rect x="45" y="5" width="5" height="5" fill="rgb(170,170,170)"/><rect x="50" y="5" width="5" height="5" fill="rgb(220,220,220)"/><rect x="60" y="5" width="5" height="5" fill="rgb(150,150,150)"/><rect x="70" y="5" width="5" height="5" fill="rgb(85,85,85)"/><rect x="80" y="5" width="5" height="5" fill="rgb(210,210,210)"/><rect x="85" y="5" width="5" height="5" fill="rgb(130,130,130)"/><rect x="95" y="5" width="5" height="5" fill="rgb(225,225,225)"/><rect x="100" y="5" width="5" height="5" fill="rgb(170,170,170)"/><rect x="0" y="10" width="5" height="5" fill="rgb(200,200,200)"/><rect x="5" y="10" width="5" height="5" fill="rgb(100,100,100)"/><rect x="10" y="10" width="5" height="5" fill="rgb(170,170,170)"/><rect x="15" y="10" width="5" height="5" fill="rgb(105,105,105)"/><rect x="25" y="10" width="5" height="5" fill="rgb(190,190,190)"/><rect x="30" y="10" width="5" height="5" fill="rgb(220,220,220)"/><rect x="35" y="10" width="5" height="5" fill="rgb(120,120,120)"/><rect x="40" y="10" width="5" height="5" fill="rgb(120,120,120)"/><rect x="45" y="10" width="5" height="5" fill="rgb(230,230,230)"/><rect x="60" y="10" width="5" height="5" fill="rgb(150,150,150)"/><rect x="70" y="10" width="5" height="5" fill="rgb(85,85,85)"/><rect x="75" y="10" width="5" height="5" fill="rgb(160,160,160)"/><rect x="80" y="10" width="5" height="5" fill="rgb(140,140,140)"/><rect x="85" y="10" width="5" height="5" fill="rgb(130,130,130)"/><rect x="95" y="10" width="5" height="5" fill="rgb(160,160,160)"/><rect x="0" y="15" width="5" height="5" fill="rgb(200,200,200)"/><rect x="5" y="15" width="5" height="5" fill="rgb(100,100,100)"/><rect x="10" y="15" width="5" height="5" fill="rgb(170,170,170)"/><rect x="15" y="15" width="5" height="5" fill="rgb(90,90,90)"/><rect x="25" y="15" width="5" height="5" fill="rgb(160,160,160)"/><rect x="40" y="15" width="5" height="5" fill="rgb(190,190,190)"/><rect x="45" y="15" width="5" height="5" fill="rgb(60,60,60)"/><rect x="50" y="15" width="5" height="5" fill="rgb(185,185,185)"/><rect x="55" y="15" width="5" height="5" fill="rgb(180,180,180)"/><rect x="60" y="15" width="5" height="5" fill="rgb(215,215,215)"/><rect x="70" y="15" width="5" height="5" fill="rgb(85,85,85)"/><rect x="80" y="15" width="5" height="5" fill="rgb(190,190,190)"/><rect x="85" y="15" width="5" height="5" fill="rgb(130,130,130)"/><rect x="95" y="15" width="5" height="5" fill="rgb(160,160,160)"/><rect x="0" y="20" width="5" height="5" fill="rgb(200,200,200)"/><rect x="5" y="20" width="5" height="5" fill="rgb(125,125,125)"/><rect x="15" y="20" width="5" height="5" fill="rgb(75,75,75)"/><rect x="20" y="20" width="5" height="5" fill="rgb(230,230,230)"/><rect x="25" y="20" width="5" height="5" fill="rgb(160,160,160)"/><rect x="35" y="20" width="5" height="5" fill="rgb(215,215,215)"/><rect x="45" y="20" width="5" height="5" fill="rgb(160,160,160)"/><rect x="50" y="20" width="5" height="5" fill="rgb(160,160,160)"/><rect x="55" y="20" width="5" height="5" fill="rgb(160,160,160)"/><rect x="70" y="20" width="5" height="5" fill="rgb(85,85,85)"/><rect x="80" y="20" width="5" height="5" fill="rgb(210,210,210)"/><rect x="85" y="20" width="5" height="5" fill="rgb(130,130,130)"/><rect x="90" y="20" width="5" height="5" fill="rgb(200,200,200)"/><rect x="95" y="20" width="5" height="5" fill="rgb(225,225,225)"/><rect x="0" y="25" width="5" height="5" fill="rgb(230,230,230)"/><rect x="5" y="25" width="5" height="5" fill="rgb(100,100,100)"/><rect x="10" y="25" width="5" height="5" fill="rgb(100,100,100)"/><rect x="15" y="25" width="5" height="5" fill="rgb(200,200,200)"/><rect x="20" y="25" width="5" height="5" fill="rgb(160,160,160)"/><rect x="25" y="25" width="5" height="5" fill="rgb(240,240,240)"/><rect x="35" y="25" width="5" height="5" fill="rgb(180,180,180)"/><rect x="40" y="25" width="5" height="5" fill="rgb(105,105,105)"/><rect x="45" y="25" width="5" height="5" fill="rgb(140,140,140)"/><rect x="50" y="25" width="5" height="5" fill="rgb(240,240,240)"/><rect x="55" y="25" width="5" height="5" fill="rgb(170,170,170)"/><rect x="70" y="25" width="5" height="5" fill="rgb(170,170,170)"/><rect x="80" y="25" width="5" height="5" fill="rgb(235,235,235)"/><rect x="85" y="25" width="5" height="5" fill="rgb(190,190,190)"/><rect x="90" y="25" width="5" height="5" fill="rgb(160,160,160)"/></svg>
<div class="t" style="left:1129px;top:511.42px;font-size:11.9px;color:#000;font-weight:bold;">Non valide (non transmis)</div>
<svg class="a" style="left:815px;top:541px" width="105" height="15" viewBox="0 0 105 15"><rect x="0" y="0" width="5" height="5" fill="rgb(235,235,235)"/><rect x="5" y="0" width="5" height="5" fill="rgb(170,170,170)"/><rect x="10" y="0" width="5" height="5" fill="rgb(185,185,185)"/><rect x="15" y="0" width="5" height="5" fill="rgb(240,240,240)"/><rect x="30" y="0" width="5" height="5" fill="rgb(165,165,165)"/><rect x="40" y="0" width="5" height="5" fill="rgb(175,175,175)"/><rect x="45" y="0" width="5" height="5" fill="rgb(180,180,180)"/><rect x="60" y="0" width="5" height="5" fill="rgb(225,225,225)"/><rect x="65" y="0" width="5" height="5" fill="rgb(200,200,200)"/><rect x="70" y="0" width="5" height="5" fill="rgb(220,220,220)"/><rect x="80" y="0" width="5" height="5" fill="rgb(240,240,240)"/><rect x="85" y="0" width="5" height="5" fill="rgb(230,230,230)"/><rect x="100" y="0" width="5" height="5" fill="rgb(165,165,165)"/><rect x="0" y="5" width="5" height="5" fill="rgb(200,200,200)"/><rect x="5" y="5" width="5" height="5" fill="rgb(105,105,105)"/><rect x="10" y="5" width="5" height="5" fill="rgb(175,175,175)"/><rect x="15" y="5" width="5" height="5" fill="rgb(80,80,80)"/><rect x="30" y="5" width="5" height="5" fill="rgb(150,150,150)"/><rect x="35" y="5" width="5" height="5" fill="rgb(120,120,120)"/><rect x="40" y="5" width="5" height="5" fill="rgb(165,165,165)"/><rect x="45" y="5" width="5" height="5" fill="rgb(170,170,170)"/><rect x="50" y="5" width="5" height="5" fill="rgb(220,220,220)"/><rect x="60" y="5" width="5" height="5" fill="rgb(150,150,150)"/><rect x="70" y="5" width="5" height="5" fill="rgb(85,85,85)"/><rect x="80" y="5" width="5" height="5" fill="rgb(210,210,210)"/><rect x="85" y="5" width="5" height="5" fill="rgb(130,130,130)"/><rect x="95" y="5" width="5" height="5" fill="rgb(225,225,225)"/><rect x="100" y="5" width="5" height="5" fill="rgb(170,170,170)"/><rect x="0" y="10" width="5" height="5" fill="rgb(200,200,200)"/><rect x="5" y="10" width="5" height="5" fill="rgb(100,100,100)"/><rect x="10" y="10" width="5" height="5" fill="rgb(170,170,170)"/><rect x="15" y="10" width="5" height="5" fill="rgb(105,105,105)"/><rect x="25" y="10" width="5" height="5" fill="rgb(190,190,190)"/><rect x="30" y="10" width="5" height="5" fill="rgb(220,220,220)"/><rect x="35" y="10" width="5" height="5" fill="rgb(120,120,120)"/><rect x="40" y="10" width="5" height="5" fill="rgb(120,120,120)"/><rect x="45" y="10" width="5" height="5" fill="rgb(230,230,230)"/><rect x="60" y="10" width="5" height="5" fill="rgb(150,150,150)"/><rect x="70" y="10" width="5" height="5" fill="rgb(85,85,85)"/><rect x="75" y="10" width="5" height="5" fill="rgb(160,160,160)"/><rect x="80" y="10" width="5" height="5" fill="rgb(140,140,140)"/><rect x="85" y="10" width="5" height="5" fill="rgb(130,130,130)"/><rect x="95" y="10" width="5" height="5" fill="rgb(160,160,160)"/><rect x="0" y="15" width="5" height="5" fill="rgb(200,200,200)"/><rect x="5" y="15" width="5" height="5" fill="rgb(100,100,100)"/><rect x="10" y="15" width="5" height="5" fill="rgb(170,170,170)"/><rect x="15" y="15" width="5" height="5" fill="rgb(90,90,90)"/><rect x="25" y="15" width="5" height="5" fill="rgb(160,160,160)"/><rect x="40" y="15" width="5" height="5" fill="rgb(190,190,190)"/><rect x="45" y="15" width="5" height="5" fill="rgb(60,60,60)"/><rect x="50" y="15" width="5" height="5" fill="rgb(185,185,185)"/><rect x="55" y="15" width="5" height="5" fill="rgb(180,180,180)"/><rect x="60" y="15" width="5" height="5" fill="rgb(215,215,215)"/><rect x="70" y="15" width="5" height="5" fill="rgb(85,85,85)"/><rect x="80" y="15" width="5" height="5" fill="rgb(190,190,190)"/><rect x="85" y="15" width="5" height="5" fill="rgb(130,130,130)"/><rect x="95" y="15" width="5" height="5" fill="rgb(160,160,160)"/><rect x="0" y="20" width="5" height="5" fill="rgb(200,200,200)"/><rect x="5" y="20" width="5" height="5" fill="rgb(125,125,125)"/><rect x="15" y="20" width="5" height="5" fill="rgb(75,75,75)"/><rect x="20" y="20" width="5" height="5" fill="rgb(230,230,230)"/><rect x="25" y="20" width="5" height="5" fill="rgb(160,160,160)"/><rect x="35" y="20" width="5" height="5" fill="rgb(215,215,215)"/><rect x="45" y="20" width="5" height="5" fill="rgb(160,160,160)"/><rect x="50" y="20" width="5" height="5" fill="rgb(160,160,160)"/><rect x="55" y="20" width="5" height="5" fill="rgb(160,160,160)"/><rect x="70" y="20" width="5" height="5" fill="rgb(85,85,85)"/><rect x="80" y="20" width="5" height="5" fill="rgb(210,210,210)"/><rect x="85" y="20" width="5" height="5" fill="rgb(130,130,130)"/><rect x="90" y="20" width="5" height="5" fill="rgb(200,200,200)"/><rect x="95" y="20" width="5" height="5" fill="rgb(225,225,225)"/><rect x="0" y="25" width="5" height="5" fill="rgb(230,230,230)"/><rect x="5" y="25" width="5" height="5" fill="rgb(100,100,100)"/><rect x="10" y="25" width="5" height="5" fill="rgb(100,100,100)"/><rect x="15" y="25" width="5" height="5" fill="rgb(200,200,200)"/><rect x="20" y="25" width="5" height="5" fill="rgb(160,160,160)"/><rect x="25" y="25" width="5" height="5" fill="rgb(240,240,240)"/><rect x="35" y="25" width="5" height="5" fill="rgb(180,180,180)"/><rect x="40" y="25" width="5" height="5" fill="rgb(105,105,105)"/><rect x="45" y="25" width="5" height="5" fill="rgb(140,140,140)"/><rect x="50" y="25" width="5" height="5" fill="rgb(240,240,240)"/><rect x="55" y="25" width="5" height="5" fill="rgb(170,170,170)"/><rect x="70" y="25" width="5" height="5" fill="rgb(170,170,170)"/><rect x="80" y="25" width="5" height="5" fill="rgb(235,235,235)"/><rect x="85" y="25" width="5" height="5" fill="rgb(190,190,190)"/><rect x="90" y="25" width="5" height="5" fill="rgb(160,160,160)"/></svg>
<div class="a" style="left:1292px;top:314px;width:17px;height:242px;background:#f0f0f0"></div>
<div class="a" style="left:1292px;top:331px;width:17px;height:11px;background:#c9c9c9"></div>
<svg class="a" style="left:1296px;top:320px" width="10" height="6" viewBox="0 0 10 6"><path d="M1,5.5 L5,1.5 L9,5.5" fill="none" stroke="#8a8a8a" stroke-width="1.1"/></svg>
<svg class="a" style="left:1296px;top:546px" width="10" height="6" viewBox="0 0 10 6"><path d="M1,0.5 L5,4.5 L9,0.5" fill="none" stroke="#8a8a8a" stroke-width="1.1"/></svg>
<div class="card" style="left:95px;top:573px;width:601px;height:372px"></div>
<div class="a" style="left:112px;top:591px;width:40px;height:40px;border-radius:50%;background:#a6b1bf"></div>
<svg class="a" style="left:112px;top:591px" width="40" height="40" viewBox="0 0 40 40"><circle cx="16.3" cy="16.3" r="5.6" fill="#fff"/><path d="M17,17 L27.6,27.6" stroke="#fff" stroke-width="3.9"/><path d="M10.2,10.2 L15.2,15.2" stroke="#a6b1bf" stroke-width="3.4"/></svg>
<div class="a" style="left:102px;top:637px;width:587px;height:3px;background:#0a6fb5"></div>
<svg class="a" style="left:653.5px;top:597.5px" width="27" height="27" viewBox="0 0 24 24"><path d="M10.3,2 L13.7,2 L14.3,4.8 C15,5.1 15.7,5.5 16.3,6 L19,5 L20.7,8 L18.6,9.9 C18.7,10.6 18.7,11.4 18.6,12.1 L20.7,14 L19,17 L16.3,16 C15.7,16.5 15,16.9 14.3,17.2 L13.7,20 L10.3,20 L9.7,17.2 C9,16.9 8.3,16.5 7.7,16 L5,17 L3.3,14 L5.4,12.1 C5.3,11.4 5.3,10.6 5.4,9.9 L3.3,8 L5,5 L7.7,6 C8.3,5.5 9,5.1 9.7,4.8 Z" fill="none" stroke="#2f4a6a" stroke-width="1.6" stroke-linejoin="round"/><circle cx="12" cy="11" r="3.2" fill="none" stroke="#2f4a6a" stroke-width="1.6"/></svg>
<div class="a" style="left:99px;top:653px;width:592px;height:289px;background:#fff;border:1px solid #d0d0d0"></div>
<div class="a" style="left:100px;top:696px;width:590px;height:3px;background:#2f4a6a"></div>
<div class="t" style="left:110px;top:670.67px;font-size:12.2px;color:#2c4b70;font-weight:normal;">N° Agora</div>
<svg class="a" style="left:180px;top:668.5px" width="12" height="13" viewBox="0 0 12 13"><path d="M1.6,1.7 L10.4,1.7 L7.1,6.3 L7.1,12.2 L5,9.9 L5,6.3 Z" fill="none" stroke="#727272" stroke-width="1.25" stroke-linejoin="miter"/></svg>
<div class="a" style="left:208px;top:663px;width:66px;height:24px;overflow:hidden">
<div class="t" style="left:0px;top:7.67px;font-size:12.2px;color:#2c4b70;font-weight:normal;">Votre référence</div>
</div>
<svg class="a" style="left:279px;top:668.5px" width="12" height="13" viewBox="0 0 12 13"><path d="M1.6,1.7 L10.4,1.7 L7.1,6.3 L7.1,12.2 L5,9.9 L5,6.3 Z" fill="none" stroke="#727272" stroke-width="1.25" stroke-linejoin="miter"/></svg>
<div class="t" style="left:306px;top:670.67px;font-size:12.2px;color:#2c4b70;font-weight:normal;">Constructeur</div>
<div class="a" style="left:405px;top:663px;width:66px;height:24px;overflow:hidden">
<div class="t" style="left:0px;top:7.67px;font-size:12.2px;color:#2c4b70;font-weight:normal;">Réf. technique</div>
</div>
<svg class="a" style="left:475px;top:668.5px" width="12" height="13" viewBox="0 0 12 13"><path d="M1.6,1.7 L10.4,1.7 L7.1,6.3 L7.1,12.2 L5,9.9 L5,6.3 Z" fill="none" stroke="#727272" stroke-width="1.25" stroke-linejoin="miter"/></svg>
<div class="a" style="left:503px;top:663px;width:85px;height:24px;overflow:hidden">
<div class="t" style="left:0px;top:7.67px;font-size:12.2px;color:#2c4b70;font-weight:normal;">Nom du consommateur</div>
</div>
<div class="a" style="left:602px;top:663px;width:65px;height:24px;overflow:hidden">
<div class="t" style="left:0px;top:7.67px;font-size:12.2px;color:#2c4b70;font-weight:normal;">Date de création</div>
</div>
<svg class="a" style="left:672px;top:668.5px" width="12" height="13" viewBox="0 0 12 13"><path d="M1.6,1.7 L10.4,1.7 L7.1,6.3 L7.1,12.2 L5,9.9 L5,6.3 Z" fill="none" stroke="#727272" stroke-width="1.25" stroke-linejoin="miter"/></svg>
<div class="a" style="left:100px;top:743px;width:16px;height:1px;background:#c4c4c4"></div>
<div class="a" style="left:672px;top:743px;width:1px;height:1px;background:#c4c4c4"></div>
<div class="a" style="left:116px;top:740px;width:556px;height:4px;background:rgba(0,0,0,.065)"></div>
<div class="a" style="left:100px;top:788px;width:16px;height:1px;background:#c4c4c4"></div>
<div class="a" style="left:672px;top:788px;width:1px;height:1px;background:#c4c4c4"></div>
<div class="a" style="left:116px;top:785px;width:556px;height:4px;background:rgba(0,0,0,.065)"></div>
<div class="a" style="left:100px;top:833px;width:16px;height:1px;background:#c4c4c4"></div>
<div class="a" style="left:672px;top:833px;width:1px;height:1px;background:#c4c4c4"></div>
<div class="a" style="left:116px;top:830px;width:556px;height:4px;background:rgba(0,0,0,.065)"></div>
<div class="a" style="left:100px;top:878px;width:16px;height:1px;background:#c4c4c4"></div>
<div class="a" style="left:672px;top:878px;width:1px;height:1px;background:#c4c4c4"></div>
<div class="a" style="left:116px;top:875px;width:556px;height:4px;background:rgba(0,0,0,.065)"></div>
<div class="a" style="left:100px;top:923px;width:16px;height:1px;background:#c4c4c4"></div>
<div class="a" style="left:672px;top:923px;width:1px;height:1px;background:#c4c4c4"></div>
<div class="a" style="left:116px;top:920px;width:556px;height:4px;background:rgba(0,0,0,.065)"></div>
<div class="a" style="left:108px;top:714px;width:50px;height:15px"><div class="a" style="left:0;top:0;width:100%;height:5.00px;background:repeating-linear-gradient(90deg,#dedee0 0 5px,#d4d4d6 5px 10px,#e4e4e6 10px 15px,#d9d9db 15px 20px)"></div><div class="a" style="left:0;top:5.00px;width:100%;height:5.00px;background:repeating-linear-gradient(90deg,#aeabad 0 5px,#928f91 5px 10px,#bebbbd 10px 15px,#a09d9f 15px 20px)"></div><div class="a" style="left:0;top:10.00px;width:100%;height:5.00px;background:repeating-linear-gradient(90deg,#e0e0e4 0 5px,#d6d6da 5px 10px,#e6e6ea 10px 15px,#dbdbdf 15px 20px)"></div></div>
<div class="a" style="left:208px;top:714px;width:20px;height:15px"><div class="a" style="left:0;top:0;width:100%;height:5.00px;background:repeating-linear-gradient(90deg,#dedede 0 5px,#d4d4d4 5px 10px,#e4e4e4 10px 15px,#d9d9d9 15px 20px)"></div><div class="a" style="left:0;top:5.00px;width:100%;height:5.00px;background:repeating-linear-gradient(90deg,#c4c2c4 0 5px,#a8a6a8 5px 10px,#d4d2d4 10px 15px,#b6b4b6 15px 20px)"></div><div class="a" style="left:0;top:10.00px;width:100%;height:5.00px;background:repeating-linear-gradient(90deg,#e3e3e3 0 5px,#d9d9d9 5px 10px,#e9e9e9 10px 15px,#dedede 15px 20px)"></div></div>
<div class="a" style="left:403px;top:714px;width:55px;height:15px"><div class="a" style="left:0;top:0;width:100%;height:5.00px;background:repeating-linear-gradient(90deg,#e0e0e2 0 5px,#d6d6d8 5px 10px,#e6e6e8 10px 15px,#dbdbdd 15px 20px)"></div><div class="a" style="left:0;top:5.00px;width:100%;height:5.00px;background:repeating-linear-gradient(90deg,#b0adb0 0 5px,#949194 5px 10px,#c0bdc0 10px 15px,#a29fa2 15px 20px)"></div><div class="a" style="left:0;top:10.00px;width:100%;height:5.00px;background:repeating-linear-gradient(90deg,#e5e5e8 0 5px,#dbdbde 5px 10px,#ebebee 10px 15px,#e0e0e3 15px 20px)"></div></div>
<div class="a" style="left:603px;top:714px;width:60px;height:15px"><div class="a" style="left:0;top:0;width:100%;height:5.00px;background:repeating-linear-gradient(90deg,#dcdcde 0 5px,#d2d2d4 5px 10px,#e2e2e4 10px 15px,#d7d7d9 15px 20px)"></div><div class="a" style="left:0;top:5.00px;width:100%;height:5.00px;background:repeating-linear-gradient(90deg,#b4b0b4 0 5px,#989498 5px 10px,#c4c0c4 10px 15px,#a6a2a6 15px 20px)"></div><div class="a" style="left:0;top:10.00px;width:100%;height:5.00px;background:repeating-linear-gradient(90deg,#e2e2e6 0 5px,#d8d8dc 5px 10px,#e8e8ec 10px 15px,#dddde1 15px 20px)"></div></div>
<div class="t" style="left:666px;top:715.84px;font-size:12px;color:#222;font-weight:normal;">1</div>
<div class="a" style="left:323px;top:713px;width:25px;height:5px;background:#a9d0e6"></div>
<div class="a" style="left:353px;top:713px;width:25px;height:5px;background:#9a9a9a"></div>
<div class="a" style="left:353px;top:713px;width:8px;height:5px;background:#d8737d"></div>
<div class="a" style="left:308px;top:724px;width:30px;height:5px;background:#b3dcef"></div>
<div class="a" style="left:338px;top:724px;width:25px;height:5px;background:#e6e6e6"></div>
<div class="a" style="left:363px;top:724px;width:30px;height:5px;background:#f0a8b2"></div>
<div class="a" style="left:108px;top:759px;width:50px;height:15px"><div class="a" style="left:0;top:0;width:100%;height:5.00px;background:repeating-linear-gradient(90deg,#dedee0 0 5px,#d4d4d6 5px 10px,#e4e4e6 10px 15px,#d9d9db 15px 20px)"></div><div class="a" style="left:0;top:5.00px;width:100%;height:5.00px;background:repeating-linear-gradient(90deg,#aeabad 0 5px,#928f91 5px 10px,#bebbbd 10px 15px,#a09d9f 15px 20px)"></div><div class="a" style="left:0;top:10.00px;width:100%;height:5.00px;background:repeating-linear-gradient(90deg,#e0e0e4 0 5px,#d6d6da 5px 10px,#e6e6ea 10px 15px,#dbdbdf 15px 20px)"></div></div>
<div class="a" style="left:208px;top:759px;width:40px;height:15px"><div class="a" style="left:0;top:0;width:100%;height:5.00px;background:repeating-linear-gradient(90deg,#dedede 0 5px,#d4d4d4 5px 10px,#e4e4e4 10px 15px,#d9d9d9 15px 20px)"></div><div class="a" style="left:0;top:5.00px;width:100%;height:5.00px;background:repeating-linear-gradient(90deg,#c4c2c4 0 5px,#a8a6a8 5px 10px,#d4d2d4 10px 15px,#b6b4b6 15px 20px)"></div><div class="a" style="left:0;top:10.00px;width:100%;height:5.00px;background:repeating-linear-gradient(90deg,#e3e3e3 0 5px,#d9d9d9 5px 10px,#e9e9e9 10px 15px,#dedede 15px 20px)"></div></div>
<div class="a" style="left:403px;top:759px;width:80px;height:15px"><div class="a" style="left:0;top:0;width:100%;height:5.00px;background:repeating-linear-gradient(90deg,#e0e0e2 0 5px,#d6d6d8 5px 10px,#e6e6e8 10px 15px,#dbdbdd 15px 20px)"></div><div class="a" style="left:0;top:5.00px;width:100%;height:5.00px;background:repeating-linear-gradient(90deg,#b0adb0 0 5px,#949194 5px 10px,#c0bdc0 10px 15px,#a29fa2 15px 20px)"></div><div class="a" style="left:0;top:10.00px;width:100%;height:5.00px;background:repeating-linear-gradient(90deg,#e5e5e8 0 5px,#dbdbde 5px 10px,#ebebee 10px 15px,#e0e0e3 15px 20px)"></div></div>
<div class="a" style="left:603px;top:759px;width:60px;height:15px"><div class="a" style="left:0;top:0;width:100%;height:5.00px;background:repeating-linear-gradient(90deg,#dcdcde 0 5px,#d2d2d4 5px 10px,#e2e2e4 10px 15px,#d7d7d9 15px 20px)"></div><div class="a" style="left:0;top:5.00px;width:100%;height:5.00px;background:repeating-linear-gradient(90deg,#b4b0b4 0 5px,#989498 5px 10px,#c4c0c4 10px 15px,#a6a2a6 15px 20px)"></div><div class="a" style="left:0;top:10.00px;width:100%;height:5.00px;background:repeating-linear-gradient(90deg,#e2e2e6 0 5px,#d8d8dc 5px 10px,#e8e8ec 10px 15px,#dddde1 15px 20px)"></div></div>
<div class="t" style="left:666px;top:760.84px;font-size:12px;color:#222;font-weight:normal;">1</div>
<svg class="a" style="left:303px;top:749px" width="90" height="35" viewBox="0 0 90 35" shape-rendering="crispEdges"><rect x="0" y="0" width="5" height="5" fill="#e0e0e0"/><rect x="5" y="0" width="5" height="5" fill="#a0a0a0"/><rect x="10" y="0" width="5" height="5" fill="#a0a0a0"/><rect x="15" y="0" width="5" height="5" fill="#9a9a9a"/><rect x="20" y="0" width="5" height="5" fill="#a0a0a0"/><rect x="25" y="0" width="5" height="5" fill="#a0a0a0"/><rect x="55" y="0" width="5" height="5" fill="#fdf3e0"/><rect x="60" y="0" width="5" height="5" fill="#fbeed0"/><rect x="65" y="0" width="5" height="5" fill="#f8e0a0"/><rect x="5" y="5" width="5" height="5" fill="#b0b0b0"/><rect x="10" y="5" width="5" height="5" fill="#d0d0d0"/><rect x="15" y="5" width="5" height="5" fill="#a8a8a8"/><rect x="20" y="5" width="5" height="5" fill="#c8c8c8"/><rect x="25" y="5" width="5" height="5" fill="#c8c8c8"/><rect x="35" y="5" width="5" height="5" fill="#d0d0d0"/><rect x="45" y="5" width="5" height="5" fill="#e8e8e8"/><rect x="50" y="5" width="5" height="5" fill="#e0d8c8"/><rect x="55" y="5" width="5" height="5" fill="#fdf3e0"/><rect x="60" y="5" width="5" height="5" fill="#fff"/><rect x="65" y="5" width="5" height="5" fill="#f8e8c0"/><rect x="85" y="5" width="5" height="5" fill="#c8c8c8"/><rect x="5" y="10" width="5" height="5" fill="#888888"/><rect x="10" y="10" width="5" height="5" fill="#a8a8a8"/><rect x="15" y="10" width="5" height="5" fill="#686868"/><rect x="20" y="10" width="5" height="5" fill="#888888"/><rect x="25" y="10" width="5" height="5" fill="#808080"/><rect x="30" y="10" width="5" height="5" fill="#888888"/><rect x="35" y="10" width="5" height="5" fill="#a8a8a8"/><rect x="40" y="10" width="5" height="5" fill="#b0b0b0"/><rect x="45" y="10" width="5" height="5" fill="#909090"/><rect x="50" y="10" width="5" height="5" fill="#989898"/><rect x="55" y="10" width="5" height="5" fill="#888888"/><rect x="60" y="10" width="5" height="5" fill="#d8c080"/><rect x="65" y="10" width="5" height="5" fill="#908878"/><rect x="70" y="10" width="5" height="5" fill="#d0d0d0"/><rect x="75" y="10" width="5" height="5" fill="#989898"/><rect x="80" y="10" width="5" height="5" fill="#b8b8b8"/><rect x="85" y="10" width="5" height="5" fill="#808080"/><rect x="5" y="15" width="5" height="5" fill="#d0d0d0"/><rect x="10" y="15" width="5" height="5" fill="#404040"/><rect x="15" y="15" width="5" height="5" fill="#888888"/><rect x="20" y="15" width="5" height="5" fill="#808080"/><rect x="25" y="15" width="5" height="5" fill="#888888"/><rect x="30" y="15" width="5" height="5" fill="#989898"/><rect x="35" y="15" width="5" height="5" fill="#707070"/><rect x="40" y="15" width="5" height="5" fill="#787878"/><rect x="45" y="15" width="5" height="5" fill="#d0d0d0"/><rect x="50" y="15" width="5" height="5" fill="#707070"/><rect x="55" y="15" width="5" height="5" fill="#d8c8a0"/><rect x="60" y="15" width="5" height="5" fill="#706048"/><rect x="65" y="15" width="5" height="5" fill="#d0d0d0"/><rect x="70" y="15" width="5" height="5" fill="#787878"/><rect x="75" y="15" width="5" height="5" fill="#989898"/><rect x="80" y="15" width="5" height="5" fill="#808080"/><rect x="85" y="15" width="5" height="5" fill="#888888"/><rect x="10" y="20" width="5" height="5" fill="#909090"/><rect x="15" y="20" width="5" height="5" fill="#d8d8d8"/><rect x="20" y="20" width="5" height="5" fill="#c0c0c0"/><rect x="25" y="20" width="5" height="5" fill="#b8b8b8"/><rect x="30" y="20" width="5" height="5" fill="#c8c8c8"/><rect x="35" y="20" width="5" height="5" fill="#a09890"/><rect x="40" y="20" width="5" height="5" fill="#b0b0b0"/><rect x="45" y="20" width="5" height="5" fill="#e0e0e0"/><rect x="50" y="20" width="5" height="5" fill="#a08850"/><rect x="55" y="20" width="5" height="5" fill="#807060"/><rect x="60" y="20" width="5" height="5" fill="#c8c8c8"/><rect x="65" y="20" width="5" height="5" fill="#888888"/><rect x="70" y="20" width="5" height="5" fill="#b8b8b8"/><rect x="75" y="20" width="5" height="5" fill="#909090"/><rect x="80" y="20" width="5" height="5" fill="#a8a8a8"/><rect x="85" y="20" width="5" height="5" fill="#a8a8a8"/><rect x="30" y="25" width="5" height="5" fill="#fdf6e6"/><rect x="35" y="25" width="5" height="5" fill="#fbeed4"/><rect x="40" y="25" width="5" height="5" fill="#fff8f0"/><rect x="45" y="25" width="5" height="5" fill="#f8e4b0"/><rect x="50" y="25" width="5" height="5" fill="#c0b8a0"/><rect x="55" y="25" width="5" height="5" fill="#e8e8e8"/><rect x="30" y="30" width="5" height="5" fill="#f8e8c0"/><rect x="35" y="30" width="5" height="5" fill="#f8e8c0"/><rect x="40" y="30" width="5" height="5" fill="#f8e8c0"/></svg>
<div class="a" style="left:108px;top:804px;width:50px;height:15px"><div class="a" style="left:0;top:0;width:100%;height:5.00px;background:repeating-linear-gradient(90deg,#dedee0 0 5px,#d4d4d6 5px 10px,#e4e4e6 10px 15px,#d9d9db 15px 20px)"></div><div class="a" style="left:0;top:5.00px;width:100%;height:5.00px;background:repeating-linear-gradient(90deg,#aeabad 0 5px,#928f91 5px 10px,#bebbbd 10px 15px,#a09d9f 15px 20px)"></div><div class="a" style="left:0;top:10.00px;width:100%;height:5.00px;background:repeating-linear-gradient(90deg,#e0e0e4 0 5px,#d6d6da 5px 10px,#e6e6ea 10px 15px,#dbdbdf 15px 20px)"></div></div>
<div class="a" style="left:208px;top:804px;width:40px;height:15px"><div class="a" style="left:0;top:0;width:100%;height:5.00px;background:repeating-linear-gradient(90deg,#dedede 0 5px,#d4d4d4 5px 10px,#e4e4e4 10px 15px,#d9d9d9 15px 20px)"></div><div class="a" style="left:0;top:5.00px;width:100%;height:5.00px;background:repeating-linear-gradient(90deg,#c4c2c4 0 5px,#a8a6a8 5px 10px,#d4d2d4 10px 15px,#b6b4b6 15px 20px)"></div><div class="a" style="left:0;top:10.00px;width:100%;height:5.00px;background:repeating-linear-gradient(90deg,#e3e3e3 0 5px,#d9d9d9 5px 10px,#e9e9e9 10px 15px,#dedede 15px 20px)"></div></div>
<div class="a" style="left:403px;top:804px;width:75px;height:15px"><div class="a" style="left:0;top:0;width:100%;height:5.00px;background:repeating-linear-gradient(90deg,#e0e0e2 0 5px,#d6d6d8 5px 10px,#e6e6e8 10px 15px,#dbdbdd 15px 20px)"></div><div class="a" style="left:0;top:5.00px;width:100%;height:5.00px;background:repeating-linear-gradient(90deg,#b0adb0 0 5px,#949194 5px 10px,#c0bdc0 10px 15px,#a29fa2 15px 20px)"></div><div class="a" style="left:0;top:10.00px;width:100%;height:5.00px;background:repeating-linear-gradient(90deg,#e5e5e8 0 5px,#dbdbde 5px 10px,#ebebee 10px 15px,#e0e0e3 15px 20px)"></div></div>
<div class="a" style="left:603px;top:804px;width:60px;height:15px"><div class="a" style="left:0;top:0;width:100%;height:5.00px;background:repeating-linear-gradient(90deg,#dcdcde 0 5px,#d2d2d4 5px 10px,#e2e2e4 10px 15px,#d7d7d9 15px 20px)"></div><div class="a" style="left:0;top:5.00px;width:100%;height:5.00px;background:repeating-linear-gradient(90deg,#b4b0b4 0 5px,#989498 5px 10px,#c4c0c4 10px 15px,#a6a2a6 15px 20px)"></div><div class="a" style="left:0;top:10.00px;width:100%;height:5.00px;background:repeating-linear-gradient(90deg,#e2e2e6 0 5px,#d8d8dc 5px 10px,#e8e8ec 10px 15px,#dddde1 15px 20px)"></div></div>
<div class="t" style="left:666px;top:805.84px;font-size:12px;color:#222;font-weight:normal;">1</div>
<svg class="a" style="left:303px;top:799px" width="95" height="25" viewBox="0 0 95 25" shape-rendering="crispEdges"><rect x="0" y="0" width="5" height="5" fill="#e0e4ec"/><rect x="5" y="0" width="5" height="5" fill="#7888a8"/><rect x="10" y="0" width="5" height="5" fill="#b8c0d0"/><rect x="15" y="0" width="5" height="5" fill="#8898b8"/><rect x="20" y="0" width="5" height="5" fill="#8898b8"/><rect x="0" y="5" width="5" height="5" fill="#c8ccd8"/><rect x="5" y="5" width="5" height="5" fill="#b0b8c8"/><rect x="10" y="5" width="5" height="5" fill="#e8eaf0"/><rect x="15" y="5" width="5" height="5" fill="#a8b0c8"/><rect x="20" y="5" width="5" height="5" fill="#7080a0"/><rect x="25" y="5" width="5" height="5" fill="#e8eaf0"/><rect x="30" y="5" width="5" height="5" fill="#a0a8c0"/><rect x="35" y="5" width="5" height="5" fill="#c8ccd8"/><rect x="55" y="5" width="5" height="5" fill="#d0d4e0"/><rect x="70" y="5" width="5" height="5" fill="#e0e4ec"/><rect x="75" y="5" width="5" height="5" fill="#e0e4ec"/><rect x="0" y="10" width="5" height="5" fill="#c8ccd8"/><rect x="5" y="10" width="5" height="5" fill="#c0c4d0"/><rect x="10" y="10" width="5" height="5" fill="#1a3060"/><rect x="15" y="10" width="5" height="5" fill="#a8b0c8"/><rect x="20" y="10" width="5" height="5" fill="#c8ccd8"/><rect x="25" y="10" width="5" height="5" fill="#d0d4e0"/><rect x="30" y="10" width="5" height="5" fill="#8890b0"/><rect x="35" y="10" width="5" height="5" fill="#98a0b8"/><rect x="40" y="10" width="5" height="5" fill="#7080a8"/><rect x="45" y="10" width="5" height="5" fill="#7080a8"/><rect x="50" y="10" width="5" height="5" fill="#c0c4d0"/><rect x="55" y="10" width="5" height="5" fill="#98a0b8"/><rect x="60" y="10" width="5" height="5" fill="#7888a8"/><rect x="65" y="10" width="5" height="5" fill="#7888a8"/><rect x="70" y="10" width="5" height="5" fill="#6878a0"/><rect x="75" y="10" width="5" height="5" fill="#6878a0"/><rect x="80" y="10" width="5" height="5" fill="#a0a8c0"/><rect x="85" y="10" width="5" height="5" fill="#7080a8"/><rect x="90" y="10" width="5" height="5" fill="#e8eaf0"/><rect x="0" y="15" width="5" height="5" fill="#c8ccd8"/><rect x="5" y="15" width="5" height="5" fill="#a8b0c8"/><rect x="10" y="15" width="5" height="5" fill="#e8eaf0"/><rect x="15" y="15" width="5" height="5" fill="#a8b0c8"/><rect x="20" y="15" width="5" height="5" fill="#7080a0"/><rect x="25" y="15" width="5" height="5" fill="#f0f0f4"/><rect x="30" y="15" width="5" height="5" fill="#a8b0c8"/><rect x="35" y="15" width="5" height="5" fill="#d8dce4"/><rect x="40" y="15" width="5" height="5" fill="#b8c0d0"/><rect x="45" y="15" width="5" height="5" fill="#d0d4e0"/><rect x="50" y="15" width="5" height="5" fill="#c0c4d0"/><rect x="55" y="15" width="5" height="5" fill="#c8ccd8"/><rect x="60" y="15" width="5" height="5" fill="#d8dce4"/><rect x="65" y="15" width="5" height="5" fill="#c0c8d8"/><rect x="70" y="15" width="5" height="5" fill="#c0c8d8"/><rect x="75" y="15" width="5" height="5" fill="#c8ccd8"/><rect x="80" y="15" width="5" height="5" fill="#c0c8d8"/><rect x="85" y="15" width="5" height="5" fill="#c8ccd8"/><rect x="90" y="15" width="5" height="5" fill="#e0e4ec"/><rect x="0" y="20" width="5" height="5" fill="#e8eaf0"/><rect x="5" y="20" width="5" height="5" fill="#98a8c0"/><rect x="10" y="20" width="5" height="5" fill="#d0d4e0"/><rect x="15" y="20" width="5" height="5" fill="#a8b0c8"/><rect x="20" y="20" width="5" height="5" fill="#a8b0c8"/></svg>
<div class="a" style="left:108px;top:849px;width:50px;height:15px"><div class="a" style="left:0;top:0;width:100%;height:5.00px;background:repeating-linear-gradient(90deg,#dedee0 0 5px,#d4d4d6 5px 10px,#e4e4e6 10px 15px,#d9d9db 15px 20px)"></div><div class="a" style="left:0;top:5.00px;width:100%;height:5.00px;background:repeating-linear-gradient(90deg,#aeabad 0 5px,#928f91 5px 10px,#bebbbd 10px 15px,#a09d9f 15px 20px)"></div><div class="a" style="left:0;top:10.00px;width:100%;height:5.00px;background:repeating-linear-gradient(90deg,#e0e0e4 0 5px,#d6d6da 5px 10px,#e6e6ea 10px 15px,#dbdbdf 15px 20px)"></div></div>
<div class="a" style="left:208px;top:849px;width:40px;height:15px"><div class="a" style="left:0;top:0;width:100%;height:5.00px;background:repeating-linear-gradient(90deg,#dedede 0 5px,#d4d4d4 5px 10px,#e4e4e4 10px 15px,#d9d9d9 15px 20px)"></div><div class="a" style="left:0;top:5.00px;width:100%;height:5.00px;background:repeating-linear-gradient(90deg,#c4c2c4 0 5px,#a8a6a8 5px 10px,#d4d2d4 10px 15px,#b6b4b6 15px 20px)"></div><div class="a" style="left:0;top:10.00px;width:100%;height:5.00px;background:repeating-linear-gradient(90deg,#e3e3e3 0 5px,#d9d9d9 5px 10px,#e9e9e9 10px 15px,#dedede 15px 20px)"></div></div>
<div class="a" style="left:403px;top:849px;width:75px;height:15px"><div class="a" style="left:0;top:0;width:100%;height:5.00px;background:repeating-linear-gradient(90deg,#e0e0e2 0 5px,#d6d6d8 5px 10px,#e6e6e8 10px 15px,#dbdbdd 15px 20px)"></div><div class="a" style="left:0;top:5.00px;width:100%;height:5.00px;background:repeating-linear-gradient(90deg,#b0adb0 0 5px,#949194 5px 10px,#c0bdc0 10px 15px,#a29fa2 15px 20px)"></div><div class="a" style="left:0;top:10.00px;width:100%;height:5.00px;background:repeating-linear-gradient(90deg,#e5e5e8 0 5px,#dbdbde 5px 10px,#ebebee 10px 15px,#e0e0e3 15px 20px)"></div></div>
<div class="a" style="left:603px;top:849px;width:60px;height:15px"><div class="a" style="left:0;top:0;width:100%;height:5.00px;background:repeating-linear-gradient(90deg,#dcdcde 0 5px,#d2d2d4 5px 10px,#e2e2e4 10px 15px,#d7d7d9 15px 20px)"></div><div class="a" style="left:0;top:5.00px;width:100%;height:5.00px;background:repeating-linear-gradient(90deg,#b4b0b4 0 5px,#989498 5px 10px,#c4c0c4 10px 15px,#a6a2a6 15px 20px)"></div><div class="a" style="left:0;top:10.00px;width:100%;height:5.00px;background:repeating-linear-gradient(90deg,#e2e2e6 0 5px,#d8d8dc 5px 10px,#e8e8ec 10px 15px,#dddde1 15px 20px)"></div></div>
<div class="t" style="left:666px;top:850.84px;font-size:12px;color:#222;font-weight:normal;">1</div>
<svg class="a" style="left:303px;top:844px" width="95" height="25" viewBox="0 0 95 25" shape-rendering="crispEdges"><rect x="0" y="0" width="5" height="5" fill="#e0e4ec"/><rect x="5" y="0" width="5" height="5" fill="#7888a8"/><rect x="10" y="0" width="5" height="5" fill="#b8c0d0"/><rect x="15" y="0" width="5" height="5" fill="#8898b8"/><rect x="20" y="0" width="5" height="5" fill="#8898b8"/><rect x="0" y="5" width="5" height="5" fill="#c8ccd8"/><rect x="5" y="5" width="5" height="5" fill="#b0b8c8"/><rect x="10" y="5" width="5" height="5" fill="#e8eaf0"/><rect x="15" y="5" width="5" height="5" fill="#a8b0c8"/><rect x="20" y="5" width="5" height="5" fill="#7080a0"/><rect x="25" y="5" width="5" height="5" fill="#e8eaf0"/><rect x="30" y="5" width="5" height="5" fill="#a0a8c0"/><rect x="35" y="5" width="5" height="5" fill="#c8ccd8"/><rect x="55" y="5" width="5" height="5" fill="#d0d4e0"/><rect x="70" y="5" width="5" height="5" fill="#e0e4ec"/><rect x="75" y="5" width="5" height="5" fill="#e0e4ec"/><rect x="0" y="10" width="5" height="5" fill="#c8ccd8"/><rect x="5" y="10" width="5" height="5" fill="#c0c4d0"/><rect x="10" y="10" width="5" height="5" fill="#1a3060"/><rect x="15" y="10" width="5" height="5" fill="#a8b0c8"/><rect x="20" y="10" width="5" height="5" fill="#c8ccd8"/><rect x="25" y="10" width="5" height="5" fill="#d0d4e0"/><rect x="30" y="10" width="5" height="5" fill="#8890b0"/><rect x="35" y="10" width="5" height="5" fill="#98a0b8"/><rect x="40" y="10" width="5" height="5" fill="#7080a8"/><rect x="45" y="10" width="5" height="5" fill="#7080a8"/><rect x="50" y="10" width="5" height="5" fill="#c0c4d0"/><rect x="55" y="10" width="5" height="5" fill="#98a0b8"/><rect x="60" y="10" width="5" height="5" fill="#7888a8"/><rect x="65" y="10" width="5" height="5" fill="#7888a8"/><rect x="70" y="10" width="5" height="5" fill="#6878a0"/><rect x="75" y="10" width="5" height="5" fill="#6878a0"/><rect x="80" y="10" width="5" height="5" fill="#a0a8c0"/><rect x="85" y="10" width="5" height="5" fill="#7080a8"/><rect x="90" y="10" width="5" height="5" fill="#e8eaf0"/><rect x="0" y="15" width="5" height="5" fill="#c8ccd8"/><rect x="5" y="15" width="5" height="5" fill="#a8b0c8"/><rect x="10" y="15" width="5" height="5" fill="#e8eaf0"/><rect x="15" y="15" width="5" height="5" fill="#a8b0c8"/><rect x="20" y="15" width="5" height="5" fill="#7080a0"/><rect x="25" y="15" width="5" height="5" fill="#f0f0f4"/><rect x="30" y="15" width="5" height="5" fill="#a8b0c8"/><rect x="35" y="15" width="5" height="5" fill="#d8dce4"/><rect x="40" y="15" width="5" height="5" fill="#b8c0d0"/><rect x="45" y="15" width="5" height="5" fill="#d0d4e0"/><rect x="50" y="15" width="5" height="5" fill="#c0c4d0"/><rect x="55" y="15" width="5" height="5" fill="#c8ccd8"/><rect x="60" y="15" width="5" height="5" fill="#d8dce4"/><rect x="65" y="15" width="5" height="5" fill="#c0c8d8"/><rect x="70" y="15" width="5" height="5" fill="#c0c8d8"/><rect x="75" y="15" width="5" height="5" fill="#c8ccd8"/><rect x="80" y="15" width="5" height="5" fill="#c0c8d8"/><rect x="85" y="15" width="5" height="5" fill="#c8ccd8"/><rect x="90" y="15" width="5" height="5" fill="#e0e4ec"/><rect x="0" y="20" width="5" height="5" fill="#e8eaf0"/><rect x="5" y="20" width="5" height="5" fill="#98a8c0"/><rect x="10" y="20" width="5" height="5" fill="#d0d4e0"/><rect x="15" y="20" width="5" height="5" fill="#a8b0c8"/><rect x="20" y="20" width="5" height="5" fill="#a8b0c8"/></svg>
<div class="a" style="left:108px;top:894px;width:50px;height:15px"><div class="a" style="left:0;top:0;width:100%;height:5.00px;background:repeating-linear-gradient(90deg,#dedee0 0 5px,#d4d4d6 5px 10px,#e4e4e6 10px 15px,#d9d9db 15px 20px)"></div><div class="a" style="left:0;top:5.00px;width:100%;height:5.00px;background:repeating-linear-gradient(90deg,#aeabad 0 5px,#928f91 5px 10px,#bebbbd 10px 15px,#a09d9f 15px 20px)"></div><div class="a" style="left:0;top:10.00px;width:100%;height:5.00px;background:repeating-linear-gradient(90deg,#e0e0e4 0 5px,#d6d6da 5px 10px,#e6e6ea 10px 15px,#dbdbdf 15px 20px)"></div></div>
<div class="a" style="left:208px;top:894px;width:40px;height:15px"><div class="a" style="left:0;top:0;width:100%;height:5.00px;background:repeating-linear-gradient(90deg,#dedede 0 5px,#d4d4d4 5px 10px,#e4e4e4 10px 15px,#d9d9d9 15px 20px)"></div><div class="a" style="left:0;top:5.00px;width:100%;height:5.00px;background:repeating-linear-gradient(90deg,#c4c2c4 0 5px,#a8a6a8 5px 10px,#d4d2d4 10px 15px,#b6b4b6 15px 20px)"></div><div class="a" style="left:0;top:10.00px;width:100%;height:5.00px;background:repeating-linear-gradient(90deg,#e3e3e3 0 5px,#d9d9d9 5px 10px,#e9e9e9 10px 15px,#dedede 15px 20px)"></div></div>
<div class="a" style="left:403px;top:894px;width:75px;height:15px"><div class="a" style="left:0;top:0;width:100%;height:5.00px;background:repeating-linear-gradient(90deg,#e0e0e2 0 5px,#d6d6d8 5px 10px,#e6e6e8 10px 15px,#dbdbdd 15px 20px)"></div><div class="a" style="left:0;top:5.00px;width:100%;height:5.00px;background:repeating-linear-gradient(90deg,#b0adb0 0 5px,#949194 5px 10px,#c0bdc0 10px 15px,#a29fa2 15px 20px)"></div><div class="a" style="left:0;top:10.00px;width:100%;height:5.00px;background:repeating-linear-gradient(90deg,#e5e5e8 0 5px,#dbdbde 5px 10px,#ebebee 10px 15px,#e0e0e3 15px 20px)"></div></div>
<div class="a" style="left:603px;top:894px;width:60px;height:15px"><div class="a" style="left:0;top:0;width:100%;height:5.00px;background:repeating-linear-gradient(90deg,#dcdcde 0 5px,#d2d2d4 5px 10px,#e2e2e4 10px 15px,#d7d7d9 15px 20px)"></div><div class="a" style="left:0;top:5.00px;width:100%;height:5.00px;background:repeating-linear-gradient(90deg,#b4b0b4 0 5px,#989498 5px 10px,#c4c0c4 10px 15px,#a6a2a6 15px 20px)"></div><div class="a" style="left:0;top:10.00px;width:100%;height:5.00px;background:repeating-linear-gradient(90deg,#e2e2e6 0 5px,#d8d8dc 5px 10px,#e8e8ec 10px 15px,#dddde1 15px 20px)"></div></div>
<div class="t" style="left:666px;top:895.84px;font-size:12px;color:#222;font-weight:normal;">1</div>
<svg class="a" style="left:303px;top:889px" width="95" height="25" viewBox="0 0 95 25" shape-rendering="crispEdges"><rect x="0" y="0" width="5" height="5" fill="#e0e4ec"/><rect x="5" y="0" width="5" height="5" fill="#7888a8"/><rect x="10" y="0" width="5" height="5" fill="#b8c0d0"/><rect x="15" y="0" width="5" height="5" fill="#8898b8"/><rect x="20" y="0" width="5" height="5" fill="#8898b8"/><rect x="0" y="5" width="5" height="5" fill="#c8ccd8"/><rect x="5" y="5" width="5" height="5" fill="#b0b8c8"/><rect x="10" y="5" width="5" height="5" fill="#e8eaf0"/><rect x="15" y="5" width="5" height="5" fill="#a8b0c8"/><rect x="20" y="5" width="5" height="5" fill="#7080a0"/><rect x="25" y="5" width="5" height="5" fill="#e8eaf0"/><rect x="30" y="5" width="5" height="5" fill="#a0a8c0"/><rect x="35" y="5" width="5" height="5" fill="#c8ccd8"/><rect x="55" y="5" width="5" height="5" fill="#d0d4e0"/><rect x="70" y="5" width="5" height="5" fill="#e0e4ec"/><rect x="75" y="5" width="5" height="5" fill="#e0e4ec"/><rect x="0" y="10" width="5" height="5" fill="#c8ccd8"/><rect x="5" y="10" width="5" height="5" fill="#c0c4d0"/><rect x="10" y="10" width="5" height="5" fill="#1a3060"/><rect x="15" y="10" width="5" height="5" fill="#a8b0c8"/><rect x="20" y="10" width="5" height="5" fill="#c8ccd8"/><rect x="25" y="10" width="5" height="5" fill="#d0d4e0"/><rect x="30" y="10" width="5" height="5" fill="#8890b0"/><rect x="35" y="10" width="5" height="5" fill="#98a0b8"/><rect x="40" y="10" width="5" height="5" fill="#7080a8"/><rect x="45" y="10" width="5" height="5" fill="#7080a8"/><rect x="50" y="10" width="5" height="5" fill="#c0c4d0"/><rect x="55" y="10" width="5" height="5" fill="#98a0b8"/><rect x="60" y="10" width="5" height="5" fill="#7888a8"/><rect x="65" y="10" width="5" height="5" fill="#7888a8"/><rect x="70" y="10" width="5" height="5" fill="#6878a0"/><rect x="75" y="10" width="5" height="5" fill="#6878a0"/><rect x="80" y="10" width="5" height="5" fill="#a0a8c0"/><rect x="85" y="10" width="5" height="5" fill="#7080a8"/><rect x="90" y="10" width="5" height="5" fill="#e8eaf0"/><rect x="0" y="15" width="5" height="5" fill="#c8ccd8"/><rect x="5" y="15" width="5" height="5" fill="#a8b0c8"/><rect x="10" y="15" width="5" height="5" fill="#e8eaf0"/><rect x="15" y="15" width="5" height="5" fill="#a8b0c8"/><rect x="20" y="15" width="5" height="5" fill="#7080a0"/><rect x="25" y="15" width="5" height="5" fill="#f0f0f4"/><rect x="30" y="15" width="5" height="5" fill="#a8b0c8"/><rect x="35" y="15" width="5" height="5" fill="#d8dce4"/><rect x="40" y="15" width="5" height="5" fill="#b8c0d0"/><rect x="45" y="15" width="5" height="5" fill="#d0d4e0"/><rect x="50" y="15" width="5" height="5" fill="#c0c4d0"/><rect x="55" y="15" width="5" height="5" fill="#c8ccd8"/><rect x="60" y="15" width="5" height="5" fill="#d8dce4"/><rect x="65" y="15" width="5" height="5" fill="#c0c8d8"/><rect x="70" y="15" width="5" height="5" fill="#c0c8d8"/><rect x="75" y="15" width="5" height="5" fill="#c8ccd8"/><rect x="80" y="15" width="5" height="5" fill="#c0c8d8"/><rect x="85" y="15" width="5" height="5" fill="#c8ccd8"/><rect x="90" y="15" width="5" height="5" fill="#e0e4ec"/><rect x="0" y="20" width="5" height="5" fill="#e8eaf0"/><rect x="5" y="20" width="5" height="5" fill="#98a8c0"/><rect x="10" y="20" width="5" height="5" fill="#d0d4e0"/><rect x="15" y="20" width="5" height="5" fill="#a8b0c8"/><rect x="20" y="20" width="5" height="5" fill="#a8b0c8"/></svg>
<div class="a" style="left:308px;top:935px;width:18px;height:7px;background:#2a3a66;border-radius:9px 9px 0 0"></div>
<div class="a" style="left:673px;top:698px;width:17px;height:243px;background:#f0f0f0"></div>
<div class="a" style="left:673px;top:717px;width:17px;height:100px;background:#c9c9c9"></div>
<svg class="a" style="left:677px;top:704px" width="10" height="6" viewBox="0 0 10 6"><path d="M1,5.5 L5,1.5 L9,5.5" fill="none" stroke="#8a8a8a" stroke-width="1.1"/></svg>
<svg class="a" style="left:677px;top:931px" width="10" height="6" viewBox="0 0 10 6"><path d="M1,0.5 L5,4.5 L9,0.5" fill="none" stroke="#8a8a8a" stroke-width="1.1"/></svg>
<div class="card" style="left:713px;top:573px;width:601px;height:372px"></div>
<div class="a" style="left:731px;top:591px;width:40px;height:40px;border-radius:50%;background:#a6b1bf"></div>
<svg class="a" style="left:731px;top:591px" width="40" height="40" viewBox="0 0 40 40"><path d="M24.2,12.2 A6.3,6.3 0 1 0 28,19" fill="none" stroke="#fff" stroke-width="1.6"/><path d="M18.6,17.8 L21.3,20.5 L27.6,14.2" fill="none" stroke="#fff" stroke-width="1.7"/><path d="M13.5,15.2 A8.2,8.2 0 0 0 19.2,26.2" fill="none" stroke="#fff" stroke-width="1.5"/></svg>
<div class="t" style="left:781px;top:603.81px;font-size:17.7px;color:#0a6db0;font-weight:bold;">Mes dernières commandes (0)</div>
<div class="a" style="left:721px;top:637px;width:587px;height:3px;background:#0a6fb5"></div>
<svg class="a" style="left:1272.5px;top:597.5px" width="27" height="27" viewBox="0 0 24 24"><path d="M10.3,2 L13.7,2 L14.3,4.8 C15,5.1 15.7,5.5 16.3,6 L19,5 L20.7,8 L18.6,9.9 C18.7,10.6 18.7,11.4 18.6,12.1 L20.7,14 L19,17 L16.3,16 C15.7,16.5 15,16.9 14.3,17.2 L13.7,20 L10.3,20 L9.7,17.2 C9,16.9 8.3,16.5 7.7,16 L5,17 L3.3,14 L5.4,12.1 C5.3,11.4 5.3,10.6 5.4,9.9 L3.3,8 L5,5 L7.7,6 C8.3,5.5 9,5.1 9.7,4.8 Z" fill="none" stroke="#2f4a6a" stroke-width="1.6" stroke-linejoin="round"/><circle cx="12" cy="11" r="3.2" fill="none" stroke="#2f4a6a" stroke-width="1.6"/></svg>
<div class="a" style="left:718px;top:653px;width:592px;height:290px;background:#fff;border:1px solid #d0d0d0"></div>
<div class="a" style="left:719px;top:696px;width:590px;height:3px;background:#2f4a6a"></div>
<div class="t" style="left:729px;top:670.67px;font-size:12.2px;color:#2c4b70;font-weight:normal;">Réf. Agora</div>
<svg class="a" style="left:791px;top:668.5px" width="12" height="13" viewBox="0 0 12 13"><path d="M1.6,1.7 L10.4,1.7 L7.1,6.3 L7.1,12.2 L5,9.9 L5,6.3 Z" fill="none" stroke="#727272" stroke-width="1.25" stroke-linejoin="miter"/></svg>
<div class="a" style="left:819px;top:663px;width:62px;height:24px;overflow:hidden">
<div class="t" style="left:0px;top:7.67px;font-size:12.2px;color:#2c4b70;font-weight:normal;">Votre référence</div>
</div>
<svg class="a" style="left:888px;top:668.5px" width="12" height="13" viewBox="0 0 12 13"><path d="M1.6,1.7 L10.4,1.7 L7.1,6.3 L7.1,12.2 L5,9.9 L5,6.3 Z" fill="none" stroke="#727272" stroke-width="1.25" stroke-linejoin="miter"/></svg>
<div class="t" style="left:916px;top:670.67px;font-size:12.2px;color:#2c4b70;font-weight:normal;">Constructeur</div>
<svg class="a" style="left:998px;top:668.5px" width="12" height="13" viewBox="0 0 12 13"><path d="M1.6,1.7 L10.4,1.7 L7.1,6.3 L7.1,12.2 L5,9.9 L5,6.3 Z" fill="none" stroke="#727272" stroke-width="1.25" stroke-linejoin="miter"/></svg>
<div class="a" style="left:1026px;top:663px;width:64px;height:24px;overflow:hidden">
<div class="t" style="left:0px;top:7.67px;font-size:12.2px;color:#2c4b70;font-weight:normal;">No. commande</div>
</div>
<svg class="a" style="left:1095px;top:668.5px" width="12" height="13" viewBox="0 0 12 13"><path d="M1.6,1.7 L10.4,1.7 L7.1,6.3 L7.1,12.2 L5,9.9 L5,6.3 Z" fill="none" stroke="#727272" stroke-width="1.25" stroke-linejoin="miter"/></svg>
<div class="t" style="left:1124px;top:670.67px;font-size:12.2px;color:#2c4b70;font-weight:normal;">Statut</div>
<svg class="a" style="left:1193px;top:668.5px" width="12" height="13" viewBox="0 0 12 13"><path d="M1.6,1.7 L10.4,1.7 L7.1,6.3 L7.1,12.2 L5,9.9 L5,6.3 Z" fill="none" stroke="#727272" stroke-width="1.25" stroke-linejoin="miter"/></svg>
<div class="t" style="left:1221px;top:670.67px;font-size:12.2px;color:#2c4b70;font-weight:normal;">Créée le</div>
<svg class="a" style="left:1290px;top:668.5px" width="12" height="13" viewBox="0 0 12 13"><path d="M1.6,1.7 L10.4,1.7 L7.1,6.3 L7.1,12.2 L5,9.9 L5,6.3 Z" fill="none" stroke="#727272" stroke-width="1.25" stroke-linejoin="miter"/></svg>
<div class="card" style="left:95px;top:959px;width:601px;height:120px"></div>
<div class="a" style="left:112px;top:976px;width:40px;height:40px;border-radius:50%;background:#a6b1bf"></div>
<svg class="a" style="left:112px;top:976px" width="40" height="40" viewBox="0 0 40 40"><rect x="11.5" y="14.5" width="17" height="11" rx="3" fill="#fff"/><path d="M18.5,17.5 L23,20 L18.5,22.5 Z" fill="#a6b1bf"/></svg>
<div class="t" style="left:162px;top:988.81px;font-size:17.7px;color:#0a6db0;font-weight:bold;">Tutoriel page d'accueil</div>
<div class="a" style="left:102px;top:1022px;width:587px;height:3px;background:#0a6fb5"></div>
<svg class="a" style="left:653.5px;top:982.5px" width="27" height="27" viewBox="0 0 24 24"><path d="M10.3,2 L13.7,2 L14.3,4.8 C15,5.1 15.7,5.5 16.3,6 L19,5 L20.7,8 L18.6,9.9 C18.7,10.6 18.7,11.4 18.6,12.1 L20.7,14 L19,17 L16.3,16 C15.7,16.5 15,16.9 14.3,17.2 L13.7,20 L10.3,20 L9.7,17.2 C9,16.9 8.3,16.5 7.7,16 L5,17 L3.3,14 L5.4,12.1 C5.3,11.4 5.3,10.6 5.4,9.9 L3.3,8 L5,5 L7.7,6 C8.3,5.5 9,5.1 9.7,4.8 Z" fill="none" stroke="#2f4a6a" stroke-width="1.6" stroke-linejoin="round"/><circle cx="12" cy="11" r="3.2" fill="none" stroke="#2f4a6a" stroke-width="1.6"/></svg>
<div class="card" style="left:713px;top:959px;width:601px;height:120px"></div>
<div class="a" style="left:731px;top:976px;width:40px;height:40px;border-radius:50%;background:#a6b1bf"></div>
<svg class="a" style="left:731px;top:976px" width="40" height="40" viewBox="0 0 40 40"><rect x="14" y="11" width="12" height="18.5" rx="1.5" fill="#fff"/><rect x="16" y="14" width="8" height="11.5" fill="#a6b1bf"/></svg>
<div class="t" style="left:781px;top:988.81px;font-size:17.7px;color:#0a6db0;font-weight:bold;">Commande par constructeur</div>
<div class="a" style="left:721px;top:1022px;width:587px;height:3px;background:#0a6fb5"></div>
<svg class="a" style="left:1272.5px;top:982.5px" width="27" height="27" viewBox="0 0 24 24"><path d="M10.3,2 L13.7,2 L14.3,4.8 C15,5.1 15.7,5.5 16.3,6 L19,5 L20.7,8 L18.6,9.9 C18.7,10.6 18.7,11.4 18.6,12.1 L20.7,14 L19,17 L16.3,16 C15.7,16.5 15,16.9 14.3,17.2 L13.7,20 L10.3,20 L9.7,17.2 C9,16.9 8.3,16.5 7.7,16 L5,17 L3.3,14 L5.4,12.1 C5.3,11.4 5.3,10.6 5.4,9.9 L3.3,8 L5,5 L7.7,6 C8.3,5.5 9,5.1 9.7,4.8 Z" fill="none" stroke="#2f4a6a" stroke-width="1.6" stroke-linejoin="round"/><circle cx="12" cy="11" r="3.2" fill="none" stroke="#2f4a6a" stroke-width="1.6"/></svg>
<div class="a" style="left:100px;top:1036px;width:588px;height:3px;background:#e6e6e6"></div>
<div class="a" style="left:81px;top:1039px;width:1358px;height:2px;background:#c8c8c8"></div>
<div class="a" style="left:1421px;top:183px;width:17px;height:856px;background:#f0f0f0"></div>
<div class="a" style="left:1421px;top:200px;width:17px;height:609px;background:#c9c9c9"></div>
<svg class="a" style="left:1425px;top:188.5px" width="10" height="6" viewBox="0 0 10 6"><path d="M1,5.5 L5,1.5 L9,5.5" fill="none" stroke="#8a8a8a" stroke-width="1.1"/></svg>
<svg class="a" style="left:1425px;top:1026px" width="10" height="6" viewBox="0 0 10 6"><path d="M1,0.5 L5,4.5 L9,0.5" fill="none" stroke="#8a8a8a" stroke-width="1.1"/></svg>
<div class="a" style="left:1439px;top:181px;width:1px;height:860px;background:#b8b8b8"></div><!-- right panel -->
<div class="a" style="left:1440px;top:181px;width:1px;height:860px;background:#fff"></div>
<div class="a" style="left:1441px;top:181px;width:379px;height:860px;background:#0077b6;border-radius:6px 0 0 6px"></div>
<div class="a" style="left:1441px;top:181px;width:16px;height:45px;background:#033d8a;border-radius:6px 0 6px 0"></div>
<svg class="a" style="left:1445px;top:196px" width="9" height="14" viewBox="0 0 9 14"><path d="M1.5,1 L7,7 L1.5,13" fill="none" stroke="#d8842a" stroke-width="1.3"/></svg>
<div class="a" style="left:1461px;top:184px;width:40px;height:40px;border-radius:50%;background:#033d8a"></div>
<svg class="a" style="left:1471px;top:194px" width="20" height="20" viewBox="0 0 20 20"><rect x="2.5" y="2" width="15" height="16" fill="none" stroke="#fff" stroke-width="1.4"/><path d="M5.5,6.5 L14.5,6.5 M5.5,10 L14.5,10 M5.5,13.5 L9.5,13.5" stroke="#fff" stroke-width="1.4"/></svg>
<div class="t" style="left:1506.5px;top:197px;font-size:13.3px;font-weight:bold;color:#fff">Ajouter une carte à votre page d'accueil</div>
<div class="t" style="left:1456px;top:239.5px;font-size:13.95px;color:#fff">Sélectionnez votre carte à l'endroit où vous souhaitez</div>
<div class="t" style="left:1456px;top:258.5px;font-size:13.7px;color:#fff">l'ajouter sur votre page d'accueil</div>

<!-- KPI -->
<div class="a" style="left:1461px;top:298px;width:120px;height:84px;background:#fff"></div>
<div class="a" style="left:1506px;top:311px;width:31px;height:31px;background:#cbcbcb"></div>
<div class="a" style="left:1488px;top:348px;width:66px;height:14px;background:#cbcbcb"></div>
<div class="t" style="left:1596.5px;top:298px;font-size:12.6px;font-weight:bold;color:#fff">KPI</div>
<div class="t" style="left:1596.5px;top:319.9px;font-size:13.7px;color:#fff">Ajoutez un KPI sur votre page</div>
<div class="t" style="left:1596.5px;top:338.4px;font-size:13.7px;color:#fff">d'accueil et définissez la valeur</div>
<div class="t" style="left:1596.5px;top:356.9px;font-size:13.7px;color:#fff">que vous souhaitez afficher</div>

<!-- Tableau -->
<div class="a" style="left:1461px;top:407px;width:120px;height:83px;background:#fff"></div>
<div class="a" style="left:1472px;top:418px;width:97px;height:14px;background:#cbcbcb"></div>
<div class="a" style="left:1472px;top:440px;width:97px;height:14px;background:#cbcbcb"></div>
<div class="a" style="left:1472px;top:461px;width:97px;height:14px;background:#cbcbcb"></div>
<div class="t" style="left:1596.5px;top:405.5px;font-size:13.3px;font-weight:bold;color:#fff">Tableau</div>
<div class="t" style="left:1596.5px;top:428px;font-size:13.7px;color:#fff">Ajouter un tableau sur la page</div>
<div class="t" style="left:1596.5px;top:447px;font-size:13.7px;color:#fff">d'accueil pour y accéder</div>
<div class="t" style="left:1596.5px;top:465px;font-size:13.7px;color:#fff">rapidement</div>

<div class="a" style="left:1456px;top:510px;width:348px;height:2px;background:#a9b4c0"></div>

<!-- Recherche par defaut -->
<div class="a" style="left:1461px;top:532px;width:120px;height:83px;background:#fff"></div>
<svg class="a" style="left:1502px;top:550px" width="50" height="50" viewBox="0 0 50 50"><path d="M3,2.5 L35,2.5 L35,20 M3,2.5 L3,40 L22,40 M3,14 L35,14 M3,27 L22,27" fill="none" stroke="#c9c9c9" stroke-width="3"/><circle cx="34.5" cy="34.5" r="11" fill="#fff" stroke="#c9c9c9" stroke-width="3"/><path d="M29,34 L33,38 L40,31" fill="none" stroke="#c9c9c9" stroke-width="3"/></svg>
<div class="t" style="left:1591.5px;top:530.5px;font-size:13.3px;font-weight:bold;color:#fff">Recherche par défaut</div>
<div class="t" style="left:1596px;top:554px;font-size:13.7px;color:#fff">Afficher les recherches</div>
<div class="t" style="left:1596px;top:572.5px;font-size:13.7px;color:#fff">proposées par défaut</div>

<!-- Mes recherches -->
<div class="a" style="left:1461px;top:640px;width:120px;height:83px;background:#fff"></div>
<svg class="a" style="left:1498px;top:662px" width="42" height="42" viewBox="0 0 42 42"><circle cx="22.8" cy="15.8" r="12.3" fill="none" stroke="#c9c9c9" stroke-width="2.5"/><path d="M14.2,24.6 L2.5,36.5" stroke="#c9c9c9" stroke-width="2.5"/></svg>
<div class="t" style="left:1591.5px;top:638px;font-size:13.3px;font-weight:bold;color:#fff">Mes recherches sauvegardées</div>
<div class="t" style="left:1596px;top:662px;font-size:13.7px;color:#fff">Afficher mes recherches</div>
<div class="t" style="left:1596px;top:680.5px;font-size:13.7px;color:#fff">sauvegardées</div>

<!-- Twitter -->
<div class="a" style="left:1461px;top:748px;width:120px;height:84px;background:#fff"></div>
<svg class="a" style="left:1497.8px;top:767.6px" width="46" height="46" viewBox="0 0 24 24"><path d="M23.5,4.5 C22.7,4.9 21.8,5.1 20.9,5.2 C21.9,4.6 22.6,3.7 22.9,2.7 C22,3.2 21,3.6 20,3.8 C19.1,2.9 17.9,2.3 16.5,2.3 C13.9,2.3 11.8,4.4 11.8,7 C11.8,7.4 11.8,7.7 11.9,8.1 C8,7.9 4.5,6 2.2,3.2 C1.8,3.9 1.6,4.7 1.6,5.6 C1.6,7.2 2.4,8.7 3.7,9.5 C2.9,9.5 2.2,9.3 1.6,9 L1.6,9 C1.6,11.3 3.2,13.2 5.4,13.6 C5,13.7 4.6,13.8 4.1,13.8 C3.8,13.8 3.5,13.8 3.2,13.7 C3.8,15.6 5.5,16.9 7.6,17 C6,18.2 4,19 1.8,19 C1.4,19 1,19 0.6,18.9 C2.7,20.3 5.2,21 7.8,21 C16.5,21 21.2,13.8 21.2,7.6 L21.2,7 C22.1,6.3 22.9,5.5 23.5,4.5 Z" fill="#c9c9c9"/></svg>
<div class="t" style="left:1591.5px;top:746px;font-size:13.3px;font-weight:bold;color:#fff">Twitter</div>
<div class="t" style="left:1596px;top:770px;font-size:13.7px;color:#fff">Fil d'actualité d'AGORA</div>

<!-- dropdown menu -->
<div class="a" style="left:231px;top:126px;width:112px;height:56px;background:#f0f0f0;box-shadow:0 2px 4px rgba(0,0,0,.25)"></div>
<div class="a" style="left:231px;top:154px;width:112px;height:28px;background:#c6c6c6"></div>
<div class="t" style="left:264px;top:134.8px;font-size:12px;color:#111">Constellation</div>
<div class="t" style="left:264px;top:163px;font-size:11.3px;color:#111">French Riviera</div>
<svg class="a" style="left:329px;top:166px" width="14" height="21" viewBox="0 0 14 21"><path d="M1,1 L1,16 L4.5,12.5 L7,18.5 L9.5,17.5 L7,11.5 L12,11.5 Z" fill="#fff" stroke="#000" stroke-width="1" stroke-linejoin="round"/></svg>
</body></html>
